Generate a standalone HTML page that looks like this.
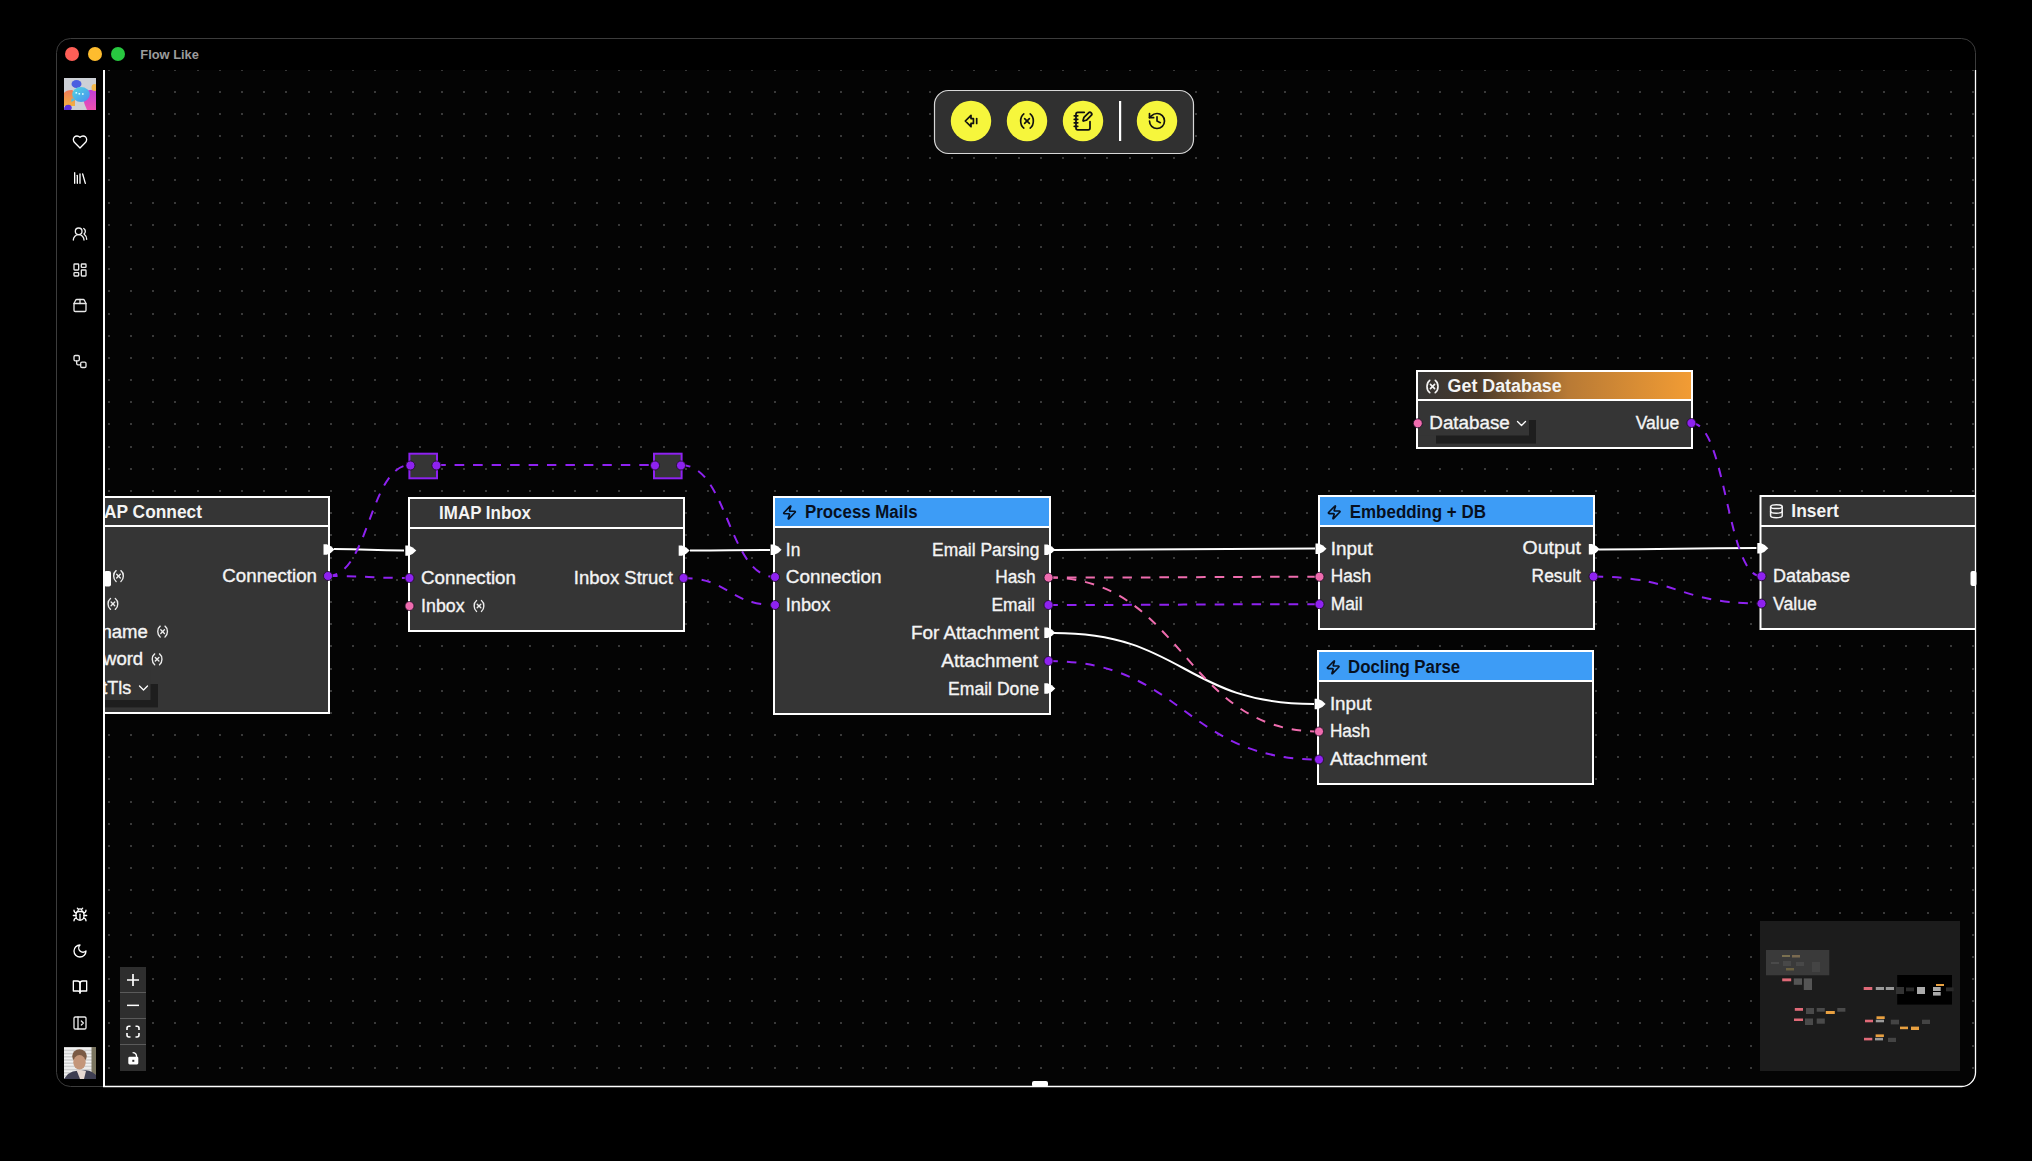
<!DOCTYPE html><html><head><meta charset="utf-8"><title>Flow Like</title><style>html,body{margin:0;padding:0;background:#000;overflow:hidden;width:2032px;height:1161px}svg{display:block}text{font-family:"Liberation Sans",sans-serif;white-space:pre}</style></head><body>
<svg width="2032" height="1161" viewBox="0 0 2032 1161">
<defs><clipPath id="canvasclip"><rect x="105" y="70" width="1870" height="1016"/></clipPath><linearGradient id="orange" x1="0" x2="1" y1="0" y2="0"><stop offset="0" stop-color="#353535"/><stop offset="0.22" stop-color="#4a3a2a"/><stop offset="0.55" stop-color="#b87a35"/><stop offset="1" stop-color="#f29c34"/></linearGradient></defs>
<rect width="2032" height="1161" fill="#000"/>
<rect x="56.5" y="38.5" width="1919" height="1048" rx="14" ry="14" fill="#000" stroke="#3c3c3c" stroke-width="1"/>
<circle cx="72" cy="54" r="7" fill="#fe5f57"/><circle cx="95" cy="54" r="7" fill="#febc2e"/><circle cx="118" cy="54" r="7" fill="#28c840"/>
<text x="140.3" y="59" font-size="12.8" font-weight="bold" fill="#9c9c9c" textLength="58.6" lengthAdjust="spacingAndGlyphs">Flow Like</text>
<path d="M105 70 H1975 V1072 A14 14 0 0 1 1961 1086 H105 Z" fill="#040404"/>
<path fill="#393939" d="M108 70h2v1h-2zM130 70h2v1h-2zM152 70h2v1h-2zM174 70h2v1h-2zM197 70h2v1h-2zM219 70h2v1h-2zM241 70h2v1h-2zM263 70h2v1h-2zM285 70h2v1h-2zM308 70h2v1h-2zM330 70h2v1h-2zM352 70h2v1h-2zM374 70h2v1h-2zM396 70h2v1h-2zM419 70h2v1h-2zM441 70h2v1h-2zM463 70h2v1h-2zM485 70h2v1h-2zM507 70h2v1h-2zM529 70h2v1h-2zM552 70h2v1h-2zM574 70h2v1h-2zM596 70h2v1h-2zM618 70h2v1h-2zM640 70h2v1h-2zM663 70h2v1h-2zM685 70h2v1h-2zM707 70h2v1h-2zM729 70h2v1h-2zM751 70h2v1h-2zM774 70h2v1h-2zM796 70h2v1h-2zM818 70h2v1h-2zM840 70h2v1h-2zM862 70h2v1h-2zM885 70h2v1h-2zM907 70h2v1h-2zM929 70h2v1h-2zM951 70h2v1h-2zM973 70h2v1h-2zM995 70h2v1h-2zM1018 70h2v1h-2zM1040 70h2v1h-2zM1062 70h2v1h-2zM1084 70h2v1h-2zM1106 70h2v1h-2zM1129 70h2v1h-2zM1151 70h2v1h-2zM1173 70h2v1h-2zM1195 70h2v1h-2zM1217 70h2v1h-2zM1240 70h2v1h-2zM1262 70h2v1h-2zM1284 70h2v1h-2zM1306 70h2v1h-2zM1328 70h2v1h-2zM1350 70h2v1h-2zM1373 70h2v1h-2zM1395 70h2v1h-2zM1417 70h2v1h-2zM1439 70h2v1h-2zM1461 70h2v1h-2zM1484 70h2v1h-2zM1506 70h2v1h-2zM1528 70h2v1h-2zM1550 70h2v1h-2zM1572 70h2v1h-2zM1595 70h2v1h-2zM1617 70h2v1h-2zM1639 70h2v1h-2zM1661 70h2v1h-2zM1683 70h2v1h-2zM1706 70h2v1h-2zM1728 70h2v1h-2zM1750 70h2v1h-2zM1772 70h2v1h-2zM1794 70h2v1h-2zM1816 70h2v1h-2zM1839 70h2v1h-2zM1861 70h2v1h-2zM1883 70h2v1h-2zM1905 70h2v1h-2zM1927 70h2v1h-2zM1950 70h2v1h-2zM1972 70h2v1h-2zM108 91h2v2h-2zM130 91h2v2h-2zM152 91h2v2h-2zM174 91h2v2h-2zM197 91h2v2h-2zM219 91h2v2h-2zM241 91h2v2h-2zM263 91h2v2h-2zM285 91h2v2h-2zM308 91h2v2h-2zM330 91h2v2h-2zM352 91h2v2h-2zM374 91h2v2h-2zM396 91h2v2h-2zM419 91h2v2h-2zM441 91h2v2h-2zM463 91h2v2h-2zM485 91h2v2h-2zM507 91h2v2h-2zM529 91h2v2h-2zM552 91h2v2h-2zM574 91h2v2h-2zM596 91h2v2h-2zM618 91h2v2h-2zM640 91h2v2h-2zM663 91h2v2h-2zM685 91h2v2h-2zM707 91h2v2h-2zM729 91h2v2h-2zM751 91h2v2h-2zM774 91h2v2h-2zM796 91h2v2h-2zM818 91h2v2h-2zM840 91h2v2h-2zM862 91h2v2h-2zM885 91h2v2h-2zM907 91h2v2h-2zM929 91h2v2h-2zM951 91h2v2h-2zM973 91h2v2h-2zM995 91h2v2h-2zM1018 91h2v2h-2zM1040 91h2v2h-2zM1062 91h2v2h-2zM1084 91h2v2h-2zM1106 91h2v2h-2zM1129 91h2v2h-2zM1151 91h2v2h-2zM1173 91h2v2h-2zM1195 91h2v2h-2zM1217 91h2v2h-2zM1240 91h2v2h-2zM1262 91h2v2h-2zM1284 91h2v2h-2zM1306 91h2v2h-2zM1328 91h2v2h-2zM1350 91h2v2h-2zM1373 91h2v2h-2zM1395 91h2v2h-2zM1417 91h2v2h-2zM1439 91h2v2h-2zM1461 91h2v2h-2zM1484 91h2v2h-2zM1506 91h2v2h-2zM1528 91h2v2h-2zM1550 91h2v2h-2zM1572 91h2v2h-2zM1595 91h2v2h-2zM1617 91h2v2h-2zM1639 91h2v2h-2zM1661 91h2v2h-2zM1683 91h2v2h-2zM1706 91h2v2h-2zM1728 91h2v2h-2zM1750 91h2v2h-2zM1772 91h2v2h-2zM1794 91h2v2h-2zM1816 91h2v2h-2zM1839 91h2v2h-2zM1861 91h2v2h-2zM1883 91h2v2h-2zM1905 91h2v2h-2zM1927 91h2v2h-2zM1950 91h2v2h-2zM1972 91h2v2h-2zM108 113h2v2h-2zM130 113h2v2h-2zM152 113h2v2h-2zM174 113h2v2h-2zM197 113h2v2h-2zM219 113h2v2h-2zM241 113h2v2h-2zM263 113h2v2h-2zM285 113h2v2h-2zM308 113h2v2h-2zM330 113h2v2h-2zM352 113h2v2h-2zM374 113h2v2h-2zM396 113h2v2h-2zM419 113h2v2h-2zM441 113h2v2h-2zM463 113h2v2h-2zM485 113h2v2h-2zM507 113h2v2h-2zM529 113h2v2h-2zM552 113h2v2h-2zM574 113h2v2h-2zM596 113h2v2h-2zM618 113h2v2h-2zM640 113h2v2h-2zM663 113h2v2h-2zM685 113h2v2h-2zM707 113h2v2h-2zM729 113h2v2h-2zM751 113h2v2h-2zM774 113h2v2h-2zM796 113h2v2h-2zM818 113h2v2h-2zM840 113h2v2h-2zM862 113h2v2h-2zM885 113h2v2h-2zM907 113h2v2h-2zM929 113h2v2h-2zM951 113h2v2h-2zM973 113h2v2h-2zM995 113h2v2h-2zM1018 113h2v2h-2zM1040 113h2v2h-2zM1062 113h2v2h-2zM1084 113h2v2h-2zM1106 113h2v2h-2zM1129 113h2v2h-2zM1151 113h2v2h-2zM1173 113h2v2h-2zM1195 113h2v2h-2zM1217 113h2v2h-2zM1240 113h2v2h-2zM1262 113h2v2h-2zM1284 113h2v2h-2zM1306 113h2v2h-2zM1328 113h2v2h-2zM1350 113h2v2h-2zM1373 113h2v2h-2zM1395 113h2v2h-2zM1417 113h2v2h-2zM1439 113h2v2h-2zM1461 113h2v2h-2zM1484 113h2v2h-2zM1506 113h2v2h-2zM1528 113h2v2h-2zM1550 113h2v2h-2zM1572 113h2v2h-2zM1595 113h2v2h-2zM1617 113h2v2h-2zM1639 113h2v2h-2zM1661 113h2v2h-2zM1683 113h2v2h-2zM1706 113h2v2h-2zM1728 113h2v2h-2zM1750 113h2v2h-2zM1772 113h2v2h-2zM1794 113h2v2h-2zM1816 113h2v2h-2zM1839 113h2v2h-2zM1861 113h2v2h-2zM1883 113h2v2h-2zM1905 113h2v2h-2zM1927 113h2v2h-2zM1950 113h2v2h-2zM1972 113h2v2h-2zM108 135h2v2h-2zM130 135h2v2h-2zM152 135h2v2h-2zM174 135h2v2h-2zM197 135h2v2h-2zM219 135h2v2h-2zM241 135h2v2h-2zM263 135h2v2h-2zM285 135h2v2h-2zM308 135h2v2h-2zM330 135h2v2h-2zM352 135h2v2h-2zM374 135h2v2h-2zM396 135h2v2h-2zM419 135h2v2h-2zM441 135h2v2h-2zM463 135h2v2h-2zM485 135h2v2h-2zM507 135h2v2h-2zM529 135h2v2h-2zM552 135h2v2h-2zM574 135h2v2h-2zM596 135h2v2h-2zM618 135h2v2h-2zM640 135h2v2h-2zM663 135h2v2h-2zM685 135h2v2h-2zM707 135h2v2h-2zM729 135h2v2h-2zM751 135h2v2h-2zM774 135h2v2h-2zM796 135h2v2h-2zM818 135h2v2h-2zM840 135h2v2h-2zM862 135h2v2h-2zM885 135h2v2h-2zM907 135h2v2h-2zM929 135h2v2h-2zM951 135h2v2h-2zM973 135h2v2h-2zM995 135h2v2h-2zM1018 135h2v2h-2zM1040 135h2v2h-2zM1062 135h2v2h-2zM1084 135h2v2h-2zM1106 135h2v2h-2zM1129 135h2v2h-2zM1151 135h2v2h-2zM1173 135h2v2h-2zM1195 135h2v2h-2zM1217 135h2v2h-2zM1240 135h2v2h-2zM1262 135h2v2h-2zM1284 135h2v2h-2zM1306 135h2v2h-2zM1328 135h2v2h-2zM1350 135h2v2h-2zM1373 135h2v2h-2zM1395 135h2v2h-2zM1417 135h2v2h-2zM1439 135h2v2h-2zM1461 135h2v2h-2zM1484 135h2v2h-2zM1506 135h2v2h-2zM1528 135h2v2h-2zM1550 135h2v2h-2zM1572 135h2v2h-2zM1595 135h2v2h-2zM1617 135h2v2h-2zM1639 135h2v2h-2zM1661 135h2v2h-2zM1683 135h2v2h-2zM1706 135h2v2h-2zM1728 135h2v2h-2zM1750 135h2v2h-2zM1772 135h2v2h-2zM1794 135h2v2h-2zM1816 135h2v2h-2zM1839 135h2v2h-2zM1861 135h2v2h-2zM1883 135h2v2h-2zM1905 135h2v2h-2zM1927 135h2v2h-2zM1950 135h2v2h-2zM1972 135h2v2h-2zM108 157h2v2h-2zM130 157h2v2h-2zM152 157h2v2h-2zM174 157h2v2h-2zM197 157h2v2h-2zM219 157h2v2h-2zM241 157h2v2h-2zM263 157h2v2h-2zM285 157h2v2h-2zM308 157h2v2h-2zM330 157h2v2h-2zM352 157h2v2h-2zM374 157h2v2h-2zM396 157h2v2h-2zM419 157h2v2h-2zM441 157h2v2h-2zM463 157h2v2h-2zM485 157h2v2h-2zM507 157h2v2h-2zM529 157h2v2h-2zM552 157h2v2h-2zM574 157h2v2h-2zM596 157h2v2h-2zM618 157h2v2h-2zM640 157h2v2h-2zM663 157h2v2h-2zM685 157h2v2h-2zM707 157h2v2h-2zM729 157h2v2h-2zM751 157h2v2h-2zM774 157h2v2h-2zM796 157h2v2h-2zM818 157h2v2h-2zM840 157h2v2h-2zM862 157h2v2h-2zM885 157h2v2h-2zM907 157h2v2h-2zM929 157h2v2h-2zM951 157h2v2h-2zM973 157h2v2h-2zM995 157h2v2h-2zM1018 157h2v2h-2zM1040 157h2v2h-2zM1062 157h2v2h-2zM1084 157h2v2h-2zM1106 157h2v2h-2zM1129 157h2v2h-2zM1151 157h2v2h-2zM1173 157h2v2h-2zM1195 157h2v2h-2zM1217 157h2v2h-2zM1240 157h2v2h-2zM1262 157h2v2h-2zM1284 157h2v2h-2zM1306 157h2v2h-2zM1328 157h2v2h-2zM1350 157h2v2h-2zM1373 157h2v2h-2zM1395 157h2v2h-2zM1417 157h2v2h-2zM1439 157h2v2h-2zM1461 157h2v2h-2zM1484 157h2v2h-2zM1506 157h2v2h-2zM1528 157h2v2h-2zM1550 157h2v2h-2zM1572 157h2v2h-2zM1595 157h2v2h-2zM1617 157h2v2h-2zM1639 157h2v2h-2zM1661 157h2v2h-2zM1683 157h2v2h-2zM1706 157h2v2h-2zM1728 157h2v2h-2zM1750 157h2v2h-2zM1772 157h2v2h-2zM1794 157h2v2h-2zM1816 157h2v2h-2zM1839 157h2v2h-2zM1861 157h2v2h-2zM1883 157h2v2h-2zM1905 157h2v2h-2zM1927 157h2v2h-2zM1950 157h2v2h-2zM1972 157h2v2h-2zM108 179h2v2h-2zM130 179h2v2h-2zM152 179h2v2h-2zM174 179h2v2h-2zM197 179h2v2h-2zM219 179h2v2h-2zM241 179h2v2h-2zM263 179h2v2h-2zM285 179h2v2h-2zM308 179h2v2h-2zM330 179h2v2h-2zM352 179h2v2h-2zM374 179h2v2h-2zM396 179h2v2h-2zM419 179h2v2h-2zM441 179h2v2h-2zM463 179h2v2h-2zM485 179h2v2h-2zM507 179h2v2h-2zM529 179h2v2h-2zM552 179h2v2h-2zM574 179h2v2h-2zM596 179h2v2h-2zM618 179h2v2h-2zM640 179h2v2h-2zM663 179h2v2h-2zM685 179h2v2h-2zM707 179h2v2h-2zM729 179h2v2h-2zM751 179h2v2h-2zM774 179h2v2h-2zM796 179h2v2h-2zM818 179h2v2h-2zM840 179h2v2h-2zM862 179h2v2h-2zM885 179h2v2h-2zM907 179h2v2h-2zM929 179h2v2h-2zM951 179h2v2h-2zM973 179h2v2h-2zM995 179h2v2h-2zM1018 179h2v2h-2zM1040 179h2v2h-2zM1062 179h2v2h-2zM1084 179h2v2h-2zM1106 179h2v2h-2zM1129 179h2v2h-2zM1151 179h2v2h-2zM1173 179h2v2h-2zM1195 179h2v2h-2zM1217 179h2v2h-2zM1240 179h2v2h-2zM1262 179h2v2h-2zM1284 179h2v2h-2zM1306 179h2v2h-2zM1328 179h2v2h-2zM1350 179h2v2h-2zM1373 179h2v2h-2zM1395 179h2v2h-2zM1417 179h2v2h-2zM1439 179h2v2h-2zM1461 179h2v2h-2zM1484 179h2v2h-2zM1506 179h2v2h-2zM1528 179h2v2h-2zM1550 179h2v2h-2zM1572 179h2v2h-2zM1595 179h2v2h-2zM1617 179h2v2h-2zM1639 179h2v2h-2zM1661 179h2v2h-2zM1683 179h2v2h-2zM1706 179h2v2h-2zM1728 179h2v2h-2zM1750 179h2v2h-2zM1772 179h2v2h-2zM1794 179h2v2h-2zM1816 179h2v2h-2zM1839 179h2v2h-2zM1861 179h2v2h-2zM1883 179h2v2h-2zM1905 179h2v2h-2zM1927 179h2v2h-2zM1950 179h2v2h-2zM1972 179h2v2h-2zM108 202h2v2h-2zM130 202h2v2h-2zM152 202h2v2h-2zM174 202h2v2h-2zM197 202h2v2h-2zM219 202h2v2h-2zM241 202h2v2h-2zM263 202h2v2h-2zM285 202h2v2h-2zM308 202h2v2h-2zM330 202h2v2h-2zM352 202h2v2h-2zM374 202h2v2h-2zM396 202h2v2h-2zM419 202h2v2h-2zM441 202h2v2h-2zM463 202h2v2h-2zM485 202h2v2h-2zM507 202h2v2h-2zM529 202h2v2h-2zM552 202h2v2h-2zM574 202h2v2h-2zM596 202h2v2h-2zM618 202h2v2h-2zM640 202h2v2h-2zM663 202h2v2h-2zM685 202h2v2h-2zM707 202h2v2h-2zM729 202h2v2h-2zM751 202h2v2h-2zM774 202h2v2h-2zM796 202h2v2h-2zM818 202h2v2h-2zM840 202h2v2h-2zM862 202h2v2h-2zM885 202h2v2h-2zM907 202h2v2h-2zM929 202h2v2h-2zM951 202h2v2h-2zM973 202h2v2h-2zM995 202h2v2h-2zM1018 202h2v2h-2zM1040 202h2v2h-2zM1062 202h2v2h-2zM1084 202h2v2h-2zM1106 202h2v2h-2zM1129 202h2v2h-2zM1151 202h2v2h-2zM1173 202h2v2h-2zM1195 202h2v2h-2zM1217 202h2v2h-2zM1240 202h2v2h-2zM1262 202h2v2h-2zM1284 202h2v2h-2zM1306 202h2v2h-2zM1328 202h2v2h-2zM1350 202h2v2h-2zM1373 202h2v2h-2zM1395 202h2v2h-2zM1417 202h2v2h-2zM1439 202h2v2h-2zM1461 202h2v2h-2zM1484 202h2v2h-2zM1506 202h2v2h-2zM1528 202h2v2h-2zM1550 202h2v2h-2zM1572 202h2v2h-2zM1595 202h2v2h-2zM1617 202h2v2h-2zM1639 202h2v2h-2zM1661 202h2v2h-2zM1683 202h2v2h-2zM1706 202h2v2h-2zM1728 202h2v2h-2zM1750 202h2v2h-2zM1772 202h2v2h-2zM1794 202h2v2h-2zM1816 202h2v2h-2zM1839 202h2v2h-2zM1861 202h2v2h-2zM1883 202h2v2h-2zM1905 202h2v2h-2zM1927 202h2v2h-2zM1950 202h2v2h-2zM1972 202h2v2h-2zM108 224h2v2h-2zM130 224h2v2h-2zM152 224h2v2h-2zM174 224h2v2h-2zM197 224h2v2h-2zM219 224h2v2h-2zM241 224h2v2h-2zM263 224h2v2h-2zM285 224h2v2h-2zM308 224h2v2h-2zM330 224h2v2h-2zM352 224h2v2h-2zM374 224h2v2h-2zM396 224h2v2h-2zM419 224h2v2h-2zM441 224h2v2h-2zM463 224h2v2h-2zM485 224h2v2h-2zM507 224h2v2h-2zM529 224h2v2h-2zM552 224h2v2h-2zM574 224h2v2h-2zM596 224h2v2h-2zM618 224h2v2h-2zM640 224h2v2h-2zM663 224h2v2h-2zM685 224h2v2h-2zM707 224h2v2h-2zM729 224h2v2h-2zM751 224h2v2h-2zM774 224h2v2h-2zM796 224h2v2h-2zM818 224h2v2h-2zM840 224h2v2h-2zM862 224h2v2h-2zM885 224h2v2h-2zM907 224h2v2h-2zM929 224h2v2h-2zM951 224h2v2h-2zM973 224h2v2h-2zM995 224h2v2h-2zM1018 224h2v2h-2zM1040 224h2v2h-2zM1062 224h2v2h-2zM1084 224h2v2h-2zM1106 224h2v2h-2zM1129 224h2v2h-2zM1151 224h2v2h-2zM1173 224h2v2h-2zM1195 224h2v2h-2zM1217 224h2v2h-2zM1240 224h2v2h-2zM1262 224h2v2h-2zM1284 224h2v2h-2zM1306 224h2v2h-2zM1328 224h2v2h-2zM1350 224h2v2h-2zM1373 224h2v2h-2zM1395 224h2v2h-2zM1417 224h2v2h-2zM1439 224h2v2h-2zM1461 224h2v2h-2zM1484 224h2v2h-2zM1506 224h2v2h-2zM1528 224h2v2h-2zM1550 224h2v2h-2zM1572 224h2v2h-2zM1595 224h2v2h-2zM1617 224h2v2h-2zM1639 224h2v2h-2zM1661 224h2v2h-2zM1683 224h2v2h-2zM1706 224h2v2h-2zM1728 224h2v2h-2zM1750 224h2v2h-2zM1772 224h2v2h-2zM1794 224h2v2h-2zM1816 224h2v2h-2zM1839 224h2v2h-2zM1861 224h2v2h-2zM1883 224h2v2h-2zM1905 224h2v2h-2zM1927 224h2v2h-2zM1950 224h2v2h-2zM1972 224h2v2h-2zM108 246h2v2h-2zM130 246h2v2h-2zM152 246h2v2h-2zM174 246h2v2h-2zM197 246h2v2h-2zM219 246h2v2h-2zM241 246h2v2h-2zM263 246h2v2h-2zM285 246h2v2h-2zM308 246h2v2h-2zM330 246h2v2h-2zM352 246h2v2h-2zM374 246h2v2h-2zM396 246h2v2h-2zM419 246h2v2h-2zM441 246h2v2h-2zM463 246h2v2h-2zM485 246h2v2h-2zM507 246h2v2h-2zM529 246h2v2h-2zM552 246h2v2h-2zM574 246h2v2h-2zM596 246h2v2h-2zM618 246h2v2h-2zM640 246h2v2h-2zM663 246h2v2h-2zM685 246h2v2h-2zM707 246h2v2h-2zM729 246h2v2h-2zM751 246h2v2h-2zM774 246h2v2h-2zM796 246h2v2h-2zM818 246h2v2h-2zM840 246h2v2h-2zM862 246h2v2h-2zM885 246h2v2h-2zM907 246h2v2h-2zM929 246h2v2h-2zM951 246h2v2h-2zM973 246h2v2h-2zM995 246h2v2h-2zM1018 246h2v2h-2zM1040 246h2v2h-2zM1062 246h2v2h-2zM1084 246h2v2h-2zM1106 246h2v2h-2zM1129 246h2v2h-2zM1151 246h2v2h-2zM1173 246h2v2h-2zM1195 246h2v2h-2zM1217 246h2v2h-2zM1240 246h2v2h-2zM1262 246h2v2h-2zM1284 246h2v2h-2zM1306 246h2v2h-2zM1328 246h2v2h-2zM1350 246h2v2h-2zM1373 246h2v2h-2zM1395 246h2v2h-2zM1417 246h2v2h-2zM1439 246h2v2h-2zM1461 246h2v2h-2zM1484 246h2v2h-2zM1506 246h2v2h-2zM1528 246h2v2h-2zM1550 246h2v2h-2zM1572 246h2v2h-2zM1595 246h2v2h-2zM1617 246h2v2h-2zM1639 246h2v2h-2zM1661 246h2v2h-2zM1683 246h2v2h-2zM1706 246h2v2h-2zM1728 246h2v2h-2zM1750 246h2v2h-2zM1772 246h2v2h-2zM1794 246h2v2h-2zM1816 246h2v2h-2zM1839 246h2v2h-2zM1861 246h2v2h-2zM1883 246h2v2h-2zM1905 246h2v2h-2zM1927 246h2v2h-2zM1950 246h2v2h-2zM1972 246h2v2h-2zM108 268h2v2h-2zM130 268h2v2h-2zM152 268h2v2h-2zM174 268h2v2h-2zM197 268h2v2h-2zM219 268h2v2h-2zM241 268h2v2h-2zM263 268h2v2h-2zM285 268h2v2h-2zM308 268h2v2h-2zM330 268h2v2h-2zM352 268h2v2h-2zM374 268h2v2h-2zM396 268h2v2h-2zM419 268h2v2h-2zM441 268h2v2h-2zM463 268h2v2h-2zM485 268h2v2h-2zM507 268h2v2h-2zM529 268h2v2h-2zM552 268h2v2h-2zM574 268h2v2h-2zM596 268h2v2h-2zM618 268h2v2h-2zM640 268h2v2h-2zM663 268h2v2h-2zM685 268h2v2h-2zM707 268h2v2h-2zM729 268h2v2h-2zM751 268h2v2h-2zM774 268h2v2h-2zM796 268h2v2h-2zM818 268h2v2h-2zM840 268h2v2h-2zM862 268h2v2h-2zM885 268h2v2h-2zM907 268h2v2h-2zM929 268h2v2h-2zM951 268h2v2h-2zM973 268h2v2h-2zM995 268h2v2h-2zM1018 268h2v2h-2zM1040 268h2v2h-2zM1062 268h2v2h-2zM1084 268h2v2h-2zM1106 268h2v2h-2zM1129 268h2v2h-2zM1151 268h2v2h-2zM1173 268h2v2h-2zM1195 268h2v2h-2zM1217 268h2v2h-2zM1240 268h2v2h-2zM1262 268h2v2h-2zM1284 268h2v2h-2zM1306 268h2v2h-2zM1328 268h2v2h-2zM1350 268h2v2h-2zM1373 268h2v2h-2zM1395 268h2v2h-2zM1417 268h2v2h-2zM1439 268h2v2h-2zM1461 268h2v2h-2zM1484 268h2v2h-2zM1506 268h2v2h-2zM1528 268h2v2h-2zM1550 268h2v2h-2zM1572 268h2v2h-2zM1595 268h2v2h-2zM1617 268h2v2h-2zM1639 268h2v2h-2zM1661 268h2v2h-2zM1683 268h2v2h-2zM1706 268h2v2h-2zM1728 268h2v2h-2zM1750 268h2v2h-2zM1772 268h2v2h-2zM1794 268h2v2h-2zM1816 268h2v2h-2zM1839 268h2v2h-2zM1861 268h2v2h-2zM1883 268h2v2h-2zM1905 268h2v2h-2zM1927 268h2v2h-2zM1950 268h2v2h-2zM1972 268h2v2h-2zM108 290h2v2h-2zM130 290h2v2h-2zM152 290h2v2h-2zM174 290h2v2h-2zM197 290h2v2h-2zM219 290h2v2h-2zM241 290h2v2h-2zM263 290h2v2h-2zM285 290h2v2h-2zM308 290h2v2h-2zM330 290h2v2h-2zM352 290h2v2h-2zM374 290h2v2h-2zM396 290h2v2h-2zM419 290h2v2h-2zM441 290h2v2h-2zM463 290h2v2h-2zM485 290h2v2h-2zM507 290h2v2h-2zM529 290h2v2h-2zM552 290h2v2h-2zM574 290h2v2h-2zM596 290h2v2h-2zM618 290h2v2h-2zM640 290h2v2h-2zM663 290h2v2h-2zM685 290h2v2h-2zM707 290h2v2h-2zM729 290h2v2h-2zM751 290h2v2h-2zM774 290h2v2h-2zM796 290h2v2h-2zM818 290h2v2h-2zM840 290h2v2h-2zM862 290h2v2h-2zM885 290h2v2h-2zM907 290h2v2h-2zM929 290h2v2h-2zM951 290h2v2h-2zM973 290h2v2h-2zM995 290h2v2h-2zM1018 290h2v2h-2zM1040 290h2v2h-2zM1062 290h2v2h-2zM1084 290h2v2h-2zM1106 290h2v2h-2zM1129 290h2v2h-2zM1151 290h2v2h-2zM1173 290h2v2h-2zM1195 290h2v2h-2zM1217 290h2v2h-2zM1240 290h2v2h-2zM1262 290h2v2h-2zM1284 290h2v2h-2zM1306 290h2v2h-2zM1328 290h2v2h-2zM1350 290h2v2h-2zM1373 290h2v2h-2zM1395 290h2v2h-2zM1417 290h2v2h-2zM1439 290h2v2h-2zM1461 290h2v2h-2zM1484 290h2v2h-2zM1506 290h2v2h-2zM1528 290h2v2h-2zM1550 290h2v2h-2zM1572 290h2v2h-2zM1595 290h2v2h-2zM1617 290h2v2h-2zM1639 290h2v2h-2zM1661 290h2v2h-2zM1683 290h2v2h-2zM1706 290h2v2h-2zM1728 290h2v2h-2zM1750 290h2v2h-2zM1772 290h2v2h-2zM1794 290h2v2h-2zM1816 290h2v2h-2zM1839 290h2v2h-2zM1861 290h2v2h-2zM1883 290h2v2h-2zM1905 290h2v2h-2zM1927 290h2v2h-2zM1950 290h2v2h-2zM1972 290h2v2h-2zM108 313h2v2h-2zM130 313h2v2h-2zM152 313h2v2h-2zM174 313h2v2h-2zM197 313h2v2h-2zM219 313h2v2h-2zM241 313h2v2h-2zM263 313h2v2h-2zM285 313h2v2h-2zM308 313h2v2h-2zM330 313h2v2h-2zM352 313h2v2h-2zM374 313h2v2h-2zM396 313h2v2h-2zM419 313h2v2h-2zM441 313h2v2h-2zM463 313h2v2h-2zM485 313h2v2h-2zM507 313h2v2h-2zM529 313h2v2h-2zM552 313h2v2h-2zM574 313h2v2h-2zM596 313h2v2h-2zM618 313h2v2h-2zM640 313h2v2h-2zM663 313h2v2h-2zM685 313h2v2h-2zM707 313h2v2h-2zM729 313h2v2h-2zM751 313h2v2h-2zM774 313h2v2h-2zM796 313h2v2h-2zM818 313h2v2h-2zM840 313h2v2h-2zM862 313h2v2h-2zM885 313h2v2h-2zM907 313h2v2h-2zM929 313h2v2h-2zM951 313h2v2h-2zM973 313h2v2h-2zM995 313h2v2h-2zM1018 313h2v2h-2zM1040 313h2v2h-2zM1062 313h2v2h-2zM1084 313h2v2h-2zM1106 313h2v2h-2zM1129 313h2v2h-2zM1151 313h2v2h-2zM1173 313h2v2h-2zM1195 313h2v2h-2zM1217 313h2v2h-2zM1240 313h2v2h-2zM1262 313h2v2h-2zM1284 313h2v2h-2zM1306 313h2v2h-2zM1328 313h2v2h-2zM1350 313h2v2h-2zM1373 313h2v2h-2zM1395 313h2v2h-2zM1417 313h2v2h-2zM1439 313h2v2h-2zM1461 313h2v2h-2zM1484 313h2v2h-2zM1506 313h2v2h-2zM1528 313h2v2h-2zM1550 313h2v2h-2zM1572 313h2v2h-2zM1595 313h2v2h-2zM1617 313h2v2h-2zM1639 313h2v2h-2zM1661 313h2v2h-2zM1683 313h2v2h-2zM1706 313h2v2h-2zM1728 313h2v2h-2zM1750 313h2v2h-2zM1772 313h2v2h-2zM1794 313h2v2h-2zM1816 313h2v2h-2zM1839 313h2v2h-2zM1861 313h2v2h-2zM1883 313h2v2h-2zM1905 313h2v2h-2zM1927 313h2v2h-2zM1950 313h2v2h-2zM1972 313h2v2h-2zM108 335h2v2h-2zM130 335h2v2h-2zM152 335h2v2h-2zM174 335h2v2h-2zM197 335h2v2h-2zM219 335h2v2h-2zM241 335h2v2h-2zM263 335h2v2h-2zM285 335h2v2h-2zM308 335h2v2h-2zM330 335h2v2h-2zM352 335h2v2h-2zM374 335h2v2h-2zM396 335h2v2h-2zM419 335h2v2h-2zM441 335h2v2h-2zM463 335h2v2h-2zM485 335h2v2h-2zM507 335h2v2h-2zM529 335h2v2h-2zM552 335h2v2h-2zM574 335h2v2h-2zM596 335h2v2h-2zM618 335h2v2h-2zM640 335h2v2h-2zM663 335h2v2h-2zM685 335h2v2h-2zM707 335h2v2h-2zM729 335h2v2h-2zM751 335h2v2h-2zM774 335h2v2h-2zM796 335h2v2h-2zM818 335h2v2h-2zM840 335h2v2h-2zM862 335h2v2h-2zM885 335h2v2h-2zM907 335h2v2h-2zM929 335h2v2h-2zM951 335h2v2h-2zM973 335h2v2h-2zM995 335h2v2h-2zM1018 335h2v2h-2zM1040 335h2v2h-2zM1062 335h2v2h-2zM1084 335h2v2h-2zM1106 335h2v2h-2zM1129 335h2v2h-2zM1151 335h2v2h-2zM1173 335h2v2h-2zM1195 335h2v2h-2zM1217 335h2v2h-2zM1240 335h2v2h-2zM1262 335h2v2h-2zM1284 335h2v2h-2zM1306 335h2v2h-2zM1328 335h2v2h-2zM1350 335h2v2h-2zM1373 335h2v2h-2zM1395 335h2v2h-2zM1417 335h2v2h-2zM1439 335h2v2h-2zM1461 335h2v2h-2zM1484 335h2v2h-2zM1506 335h2v2h-2zM1528 335h2v2h-2zM1550 335h2v2h-2zM1572 335h2v2h-2zM1595 335h2v2h-2zM1617 335h2v2h-2zM1639 335h2v2h-2zM1661 335h2v2h-2zM1683 335h2v2h-2zM1706 335h2v2h-2zM1728 335h2v2h-2zM1750 335h2v2h-2zM1772 335h2v2h-2zM1794 335h2v2h-2zM1816 335h2v2h-2zM1839 335h2v2h-2zM1861 335h2v2h-2zM1883 335h2v2h-2zM1905 335h2v2h-2zM1927 335h2v2h-2zM1950 335h2v2h-2zM1972 335h2v2h-2zM108 357h2v2h-2zM130 357h2v2h-2zM152 357h2v2h-2zM174 357h2v2h-2zM197 357h2v2h-2zM219 357h2v2h-2zM241 357h2v2h-2zM263 357h2v2h-2zM285 357h2v2h-2zM308 357h2v2h-2zM330 357h2v2h-2zM352 357h2v2h-2zM374 357h2v2h-2zM396 357h2v2h-2zM419 357h2v2h-2zM441 357h2v2h-2zM463 357h2v2h-2zM485 357h2v2h-2zM507 357h2v2h-2zM529 357h2v2h-2zM552 357h2v2h-2zM574 357h2v2h-2zM596 357h2v2h-2zM618 357h2v2h-2zM640 357h2v2h-2zM663 357h2v2h-2zM685 357h2v2h-2zM707 357h2v2h-2zM729 357h2v2h-2zM751 357h2v2h-2zM774 357h2v2h-2zM796 357h2v2h-2zM818 357h2v2h-2zM840 357h2v2h-2zM862 357h2v2h-2zM885 357h2v2h-2zM907 357h2v2h-2zM929 357h2v2h-2zM951 357h2v2h-2zM973 357h2v2h-2zM995 357h2v2h-2zM1018 357h2v2h-2zM1040 357h2v2h-2zM1062 357h2v2h-2zM1084 357h2v2h-2zM1106 357h2v2h-2zM1129 357h2v2h-2zM1151 357h2v2h-2zM1173 357h2v2h-2zM1195 357h2v2h-2zM1217 357h2v2h-2zM1240 357h2v2h-2zM1262 357h2v2h-2zM1284 357h2v2h-2zM1306 357h2v2h-2zM1328 357h2v2h-2zM1350 357h2v2h-2zM1373 357h2v2h-2zM1395 357h2v2h-2zM1417 357h2v2h-2zM1439 357h2v2h-2zM1461 357h2v2h-2zM1484 357h2v2h-2zM1506 357h2v2h-2zM1528 357h2v2h-2zM1550 357h2v2h-2zM1572 357h2v2h-2zM1595 357h2v2h-2zM1617 357h2v2h-2zM1639 357h2v2h-2zM1661 357h2v2h-2zM1683 357h2v2h-2zM1706 357h2v2h-2zM1728 357h2v2h-2zM1750 357h2v2h-2zM1772 357h2v2h-2zM1794 357h2v2h-2zM1816 357h2v2h-2zM1839 357h2v2h-2zM1861 357h2v2h-2zM1883 357h2v2h-2zM1905 357h2v2h-2zM1927 357h2v2h-2zM1950 357h2v2h-2zM1972 357h2v2h-2zM108 379h2v2h-2zM130 379h2v2h-2zM152 379h2v2h-2zM174 379h2v2h-2zM197 379h2v2h-2zM219 379h2v2h-2zM241 379h2v2h-2zM263 379h2v2h-2zM285 379h2v2h-2zM308 379h2v2h-2zM330 379h2v2h-2zM352 379h2v2h-2zM374 379h2v2h-2zM396 379h2v2h-2zM419 379h2v2h-2zM441 379h2v2h-2zM463 379h2v2h-2zM485 379h2v2h-2zM507 379h2v2h-2zM529 379h2v2h-2zM552 379h2v2h-2zM574 379h2v2h-2zM596 379h2v2h-2zM618 379h2v2h-2zM640 379h2v2h-2zM663 379h2v2h-2zM685 379h2v2h-2zM707 379h2v2h-2zM729 379h2v2h-2zM751 379h2v2h-2zM774 379h2v2h-2zM796 379h2v2h-2zM818 379h2v2h-2zM840 379h2v2h-2zM862 379h2v2h-2zM885 379h2v2h-2zM907 379h2v2h-2zM929 379h2v2h-2zM951 379h2v2h-2zM973 379h2v2h-2zM995 379h2v2h-2zM1018 379h2v2h-2zM1040 379h2v2h-2zM1062 379h2v2h-2zM1084 379h2v2h-2zM1106 379h2v2h-2zM1129 379h2v2h-2zM1151 379h2v2h-2zM1173 379h2v2h-2zM1195 379h2v2h-2zM1217 379h2v2h-2zM1240 379h2v2h-2zM1262 379h2v2h-2zM1284 379h2v2h-2zM1306 379h2v2h-2zM1328 379h2v2h-2zM1350 379h2v2h-2zM1373 379h2v2h-2zM1395 379h2v2h-2zM1417 379h2v2h-2zM1439 379h2v2h-2zM1461 379h2v2h-2zM1484 379h2v2h-2zM1506 379h2v2h-2zM1528 379h2v2h-2zM1550 379h2v2h-2zM1572 379h2v2h-2zM1595 379h2v2h-2zM1617 379h2v2h-2zM1639 379h2v2h-2zM1661 379h2v2h-2zM1683 379h2v2h-2zM1706 379h2v2h-2zM1728 379h2v2h-2zM1750 379h2v2h-2zM1772 379h2v2h-2zM1794 379h2v2h-2zM1816 379h2v2h-2zM1839 379h2v2h-2zM1861 379h2v2h-2zM1883 379h2v2h-2zM1905 379h2v2h-2zM1927 379h2v2h-2zM1950 379h2v2h-2zM1972 379h2v2h-2zM108 401h2v2h-2zM130 401h2v2h-2zM152 401h2v2h-2zM174 401h2v2h-2zM197 401h2v2h-2zM219 401h2v2h-2zM241 401h2v2h-2zM263 401h2v2h-2zM285 401h2v2h-2zM308 401h2v2h-2zM330 401h2v2h-2zM352 401h2v2h-2zM374 401h2v2h-2zM396 401h2v2h-2zM419 401h2v2h-2zM441 401h2v2h-2zM463 401h2v2h-2zM485 401h2v2h-2zM507 401h2v2h-2zM529 401h2v2h-2zM552 401h2v2h-2zM574 401h2v2h-2zM596 401h2v2h-2zM618 401h2v2h-2zM640 401h2v2h-2zM663 401h2v2h-2zM685 401h2v2h-2zM707 401h2v2h-2zM729 401h2v2h-2zM751 401h2v2h-2zM774 401h2v2h-2zM796 401h2v2h-2zM818 401h2v2h-2zM840 401h2v2h-2zM862 401h2v2h-2zM885 401h2v2h-2zM907 401h2v2h-2zM929 401h2v2h-2zM951 401h2v2h-2zM973 401h2v2h-2zM995 401h2v2h-2zM1018 401h2v2h-2zM1040 401h2v2h-2zM1062 401h2v2h-2zM1084 401h2v2h-2zM1106 401h2v2h-2zM1129 401h2v2h-2zM1151 401h2v2h-2zM1173 401h2v2h-2zM1195 401h2v2h-2zM1217 401h2v2h-2zM1240 401h2v2h-2zM1262 401h2v2h-2zM1284 401h2v2h-2zM1306 401h2v2h-2zM1328 401h2v2h-2zM1350 401h2v2h-2zM1373 401h2v2h-2zM1395 401h2v2h-2zM1417 401h2v2h-2zM1439 401h2v2h-2zM1461 401h2v2h-2zM1484 401h2v2h-2zM1506 401h2v2h-2zM1528 401h2v2h-2zM1550 401h2v2h-2zM1572 401h2v2h-2zM1595 401h2v2h-2zM1617 401h2v2h-2zM1639 401h2v2h-2zM1661 401h2v2h-2zM1683 401h2v2h-2zM1706 401h2v2h-2zM1728 401h2v2h-2zM1750 401h2v2h-2zM1772 401h2v2h-2zM1794 401h2v2h-2zM1816 401h2v2h-2zM1839 401h2v2h-2zM1861 401h2v2h-2zM1883 401h2v2h-2zM1905 401h2v2h-2zM1927 401h2v2h-2zM1950 401h2v2h-2zM1972 401h2v2h-2zM108 423h2v2h-2zM130 423h2v2h-2zM152 423h2v2h-2zM174 423h2v2h-2zM197 423h2v2h-2zM219 423h2v2h-2zM241 423h2v2h-2zM263 423h2v2h-2zM285 423h2v2h-2zM308 423h2v2h-2zM330 423h2v2h-2zM352 423h2v2h-2zM374 423h2v2h-2zM396 423h2v2h-2zM419 423h2v2h-2zM441 423h2v2h-2zM463 423h2v2h-2zM485 423h2v2h-2zM507 423h2v2h-2zM529 423h2v2h-2zM552 423h2v2h-2zM574 423h2v2h-2zM596 423h2v2h-2zM618 423h2v2h-2zM640 423h2v2h-2zM663 423h2v2h-2zM685 423h2v2h-2zM707 423h2v2h-2zM729 423h2v2h-2zM751 423h2v2h-2zM774 423h2v2h-2zM796 423h2v2h-2zM818 423h2v2h-2zM840 423h2v2h-2zM862 423h2v2h-2zM885 423h2v2h-2zM907 423h2v2h-2zM929 423h2v2h-2zM951 423h2v2h-2zM973 423h2v2h-2zM995 423h2v2h-2zM1018 423h2v2h-2zM1040 423h2v2h-2zM1062 423h2v2h-2zM1084 423h2v2h-2zM1106 423h2v2h-2zM1129 423h2v2h-2zM1151 423h2v2h-2zM1173 423h2v2h-2zM1195 423h2v2h-2zM1217 423h2v2h-2zM1240 423h2v2h-2zM1262 423h2v2h-2zM1284 423h2v2h-2zM1306 423h2v2h-2zM1328 423h2v2h-2zM1350 423h2v2h-2zM1373 423h2v2h-2zM1395 423h2v2h-2zM1417 423h2v2h-2zM1439 423h2v2h-2zM1461 423h2v2h-2zM1484 423h2v2h-2zM1506 423h2v2h-2zM1528 423h2v2h-2zM1550 423h2v2h-2zM1572 423h2v2h-2zM1595 423h2v2h-2zM1617 423h2v2h-2zM1639 423h2v2h-2zM1661 423h2v2h-2zM1683 423h2v2h-2zM1706 423h2v2h-2zM1728 423h2v2h-2zM1750 423h2v2h-2zM1772 423h2v2h-2zM1794 423h2v2h-2zM1816 423h2v2h-2zM1839 423h2v2h-2zM1861 423h2v2h-2zM1883 423h2v2h-2zM1905 423h2v2h-2zM1927 423h2v2h-2zM1950 423h2v2h-2zM1972 423h2v2h-2zM108 446h2v2h-2zM130 446h2v2h-2zM152 446h2v2h-2zM174 446h2v2h-2zM197 446h2v2h-2zM219 446h2v2h-2zM241 446h2v2h-2zM263 446h2v2h-2zM285 446h2v2h-2zM308 446h2v2h-2zM330 446h2v2h-2zM352 446h2v2h-2zM374 446h2v2h-2zM396 446h2v2h-2zM419 446h2v2h-2zM441 446h2v2h-2zM463 446h2v2h-2zM485 446h2v2h-2zM507 446h2v2h-2zM529 446h2v2h-2zM552 446h2v2h-2zM574 446h2v2h-2zM596 446h2v2h-2zM618 446h2v2h-2zM640 446h2v2h-2zM663 446h2v2h-2zM685 446h2v2h-2zM707 446h2v2h-2zM729 446h2v2h-2zM751 446h2v2h-2zM774 446h2v2h-2zM796 446h2v2h-2zM818 446h2v2h-2zM840 446h2v2h-2zM862 446h2v2h-2zM885 446h2v2h-2zM907 446h2v2h-2zM929 446h2v2h-2zM951 446h2v2h-2zM973 446h2v2h-2zM995 446h2v2h-2zM1018 446h2v2h-2zM1040 446h2v2h-2zM1062 446h2v2h-2zM1084 446h2v2h-2zM1106 446h2v2h-2zM1129 446h2v2h-2zM1151 446h2v2h-2zM1173 446h2v2h-2zM1195 446h2v2h-2zM1217 446h2v2h-2zM1240 446h2v2h-2zM1262 446h2v2h-2zM1284 446h2v2h-2zM1306 446h2v2h-2zM1328 446h2v2h-2zM1350 446h2v2h-2zM1373 446h2v2h-2zM1395 446h2v2h-2zM1417 446h2v2h-2zM1439 446h2v2h-2zM1461 446h2v2h-2zM1484 446h2v2h-2zM1506 446h2v2h-2zM1528 446h2v2h-2zM1550 446h2v2h-2zM1572 446h2v2h-2zM1595 446h2v2h-2zM1617 446h2v2h-2zM1639 446h2v2h-2zM1661 446h2v2h-2zM1683 446h2v2h-2zM1706 446h2v2h-2zM1728 446h2v2h-2zM1750 446h2v2h-2zM1772 446h2v2h-2zM1794 446h2v2h-2zM1816 446h2v2h-2zM1839 446h2v2h-2zM1861 446h2v2h-2zM1883 446h2v2h-2zM1905 446h2v2h-2zM1927 446h2v2h-2zM1950 446h2v2h-2zM1972 446h2v2h-2zM108 468h2v2h-2zM130 468h2v2h-2zM152 468h2v2h-2zM174 468h2v2h-2zM197 468h2v2h-2zM219 468h2v2h-2zM241 468h2v2h-2zM263 468h2v2h-2zM285 468h2v2h-2zM308 468h2v2h-2zM330 468h2v2h-2zM352 468h2v2h-2zM374 468h2v2h-2zM396 468h2v2h-2zM419 468h2v2h-2zM441 468h2v2h-2zM463 468h2v2h-2zM485 468h2v2h-2zM507 468h2v2h-2zM529 468h2v2h-2zM552 468h2v2h-2zM574 468h2v2h-2zM596 468h2v2h-2zM618 468h2v2h-2zM640 468h2v2h-2zM663 468h2v2h-2zM685 468h2v2h-2zM707 468h2v2h-2zM729 468h2v2h-2zM751 468h2v2h-2zM774 468h2v2h-2zM796 468h2v2h-2zM818 468h2v2h-2zM840 468h2v2h-2zM862 468h2v2h-2zM885 468h2v2h-2zM907 468h2v2h-2zM929 468h2v2h-2zM951 468h2v2h-2zM973 468h2v2h-2zM995 468h2v2h-2zM1018 468h2v2h-2zM1040 468h2v2h-2zM1062 468h2v2h-2zM1084 468h2v2h-2zM1106 468h2v2h-2zM1129 468h2v2h-2zM1151 468h2v2h-2zM1173 468h2v2h-2zM1195 468h2v2h-2zM1217 468h2v2h-2zM1240 468h2v2h-2zM1262 468h2v2h-2zM1284 468h2v2h-2zM1306 468h2v2h-2zM1328 468h2v2h-2zM1350 468h2v2h-2zM1373 468h2v2h-2zM1395 468h2v2h-2zM1417 468h2v2h-2zM1439 468h2v2h-2zM1461 468h2v2h-2zM1484 468h2v2h-2zM1506 468h2v2h-2zM1528 468h2v2h-2zM1550 468h2v2h-2zM1572 468h2v2h-2zM1595 468h2v2h-2zM1617 468h2v2h-2zM1639 468h2v2h-2zM1661 468h2v2h-2zM1683 468h2v2h-2zM1706 468h2v2h-2zM1728 468h2v2h-2zM1750 468h2v2h-2zM1772 468h2v2h-2zM1794 468h2v2h-2zM1816 468h2v2h-2zM1839 468h2v2h-2zM1861 468h2v2h-2zM1883 468h2v2h-2zM1905 468h2v2h-2zM1927 468h2v2h-2zM1950 468h2v2h-2zM1972 468h2v2h-2zM108 490h2v2h-2zM130 490h2v2h-2zM152 490h2v2h-2zM174 490h2v2h-2zM197 490h2v2h-2zM219 490h2v2h-2zM241 490h2v2h-2zM263 490h2v2h-2zM285 490h2v2h-2zM308 490h2v2h-2zM330 490h2v2h-2zM352 490h2v2h-2zM374 490h2v2h-2zM396 490h2v2h-2zM419 490h2v2h-2zM441 490h2v2h-2zM463 490h2v2h-2zM485 490h2v2h-2zM507 490h2v2h-2zM529 490h2v2h-2zM552 490h2v2h-2zM574 490h2v2h-2zM596 490h2v2h-2zM618 490h2v2h-2zM640 490h2v2h-2zM663 490h2v2h-2zM685 490h2v2h-2zM707 490h2v2h-2zM729 490h2v2h-2zM751 490h2v2h-2zM774 490h2v2h-2zM796 490h2v2h-2zM818 490h2v2h-2zM840 490h2v2h-2zM862 490h2v2h-2zM885 490h2v2h-2zM907 490h2v2h-2zM929 490h2v2h-2zM951 490h2v2h-2zM973 490h2v2h-2zM995 490h2v2h-2zM1018 490h2v2h-2zM1040 490h2v2h-2zM1062 490h2v2h-2zM1084 490h2v2h-2zM1106 490h2v2h-2zM1129 490h2v2h-2zM1151 490h2v2h-2zM1173 490h2v2h-2zM1195 490h2v2h-2zM1217 490h2v2h-2zM1240 490h2v2h-2zM1262 490h2v2h-2zM1284 490h2v2h-2zM1306 490h2v2h-2zM1328 490h2v2h-2zM1350 490h2v2h-2zM1373 490h2v2h-2zM1395 490h2v2h-2zM1417 490h2v2h-2zM1439 490h2v2h-2zM1461 490h2v2h-2zM1484 490h2v2h-2zM1506 490h2v2h-2zM1528 490h2v2h-2zM1550 490h2v2h-2zM1572 490h2v2h-2zM1595 490h2v2h-2zM1617 490h2v2h-2zM1639 490h2v2h-2zM1661 490h2v2h-2zM1683 490h2v2h-2zM1706 490h2v2h-2zM1728 490h2v2h-2zM1750 490h2v2h-2zM1772 490h2v2h-2zM1794 490h2v2h-2zM1816 490h2v2h-2zM1839 490h2v2h-2zM1861 490h2v2h-2zM1883 490h2v2h-2zM1905 490h2v2h-2zM1927 490h2v2h-2zM1950 490h2v2h-2zM1972 490h2v2h-2zM108 512h2v2h-2zM130 512h2v2h-2zM152 512h2v2h-2zM174 512h2v2h-2zM197 512h2v2h-2zM219 512h2v2h-2zM241 512h2v2h-2zM263 512h2v2h-2zM285 512h2v2h-2zM308 512h2v2h-2zM330 512h2v2h-2zM352 512h2v2h-2zM374 512h2v2h-2zM396 512h2v2h-2zM419 512h2v2h-2zM441 512h2v2h-2zM463 512h2v2h-2zM485 512h2v2h-2zM507 512h2v2h-2zM529 512h2v2h-2zM552 512h2v2h-2zM574 512h2v2h-2zM596 512h2v2h-2zM618 512h2v2h-2zM640 512h2v2h-2zM663 512h2v2h-2zM685 512h2v2h-2zM707 512h2v2h-2zM729 512h2v2h-2zM751 512h2v2h-2zM774 512h2v2h-2zM796 512h2v2h-2zM818 512h2v2h-2zM840 512h2v2h-2zM862 512h2v2h-2zM885 512h2v2h-2zM907 512h2v2h-2zM929 512h2v2h-2zM951 512h2v2h-2zM973 512h2v2h-2zM995 512h2v2h-2zM1018 512h2v2h-2zM1040 512h2v2h-2zM1062 512h2v2h-2zM1084 512h2v2h-2zM1106 512h2v2h-2zM1129 512h2v2h-2zM1151 512h2v2h-2zM1173 512h2v2h-2zM1195 512h2v2h-2zM1217 512h2v2h-2zM1240 512h2v2h-2zM1262 512h2v2h-2zM1284 512h2v2h-2zM1306 512h2v2h-2zM1328 512h2v2h-2zM1350 512h2v2h-2zM1373 512h2v2h-2zM1395 512h2v2h-2zM1417 512h2v2h-2zM1439 512h2v2h-2zM1461 512h2v2h-2zM1484 512h2v2h-2zM1506 512h2v2h-2zM1528 512h2v2h-2zM1550 512h2v2h-2zM1572 512h2v2h-2zM1595 512h2v2h-2zM1617 512h2v2h-2zM1639 512h2v2h-2zM1661 512h2v2h-2zM1683 512h2v2h-2zM1706 512h2v2h-2zM1728 512h2v2h-2zM1750 512h2v2h-2zM1772 512h2v2h-2zM1794 512h2v2h-2zM1816 512h2v2h-2zM1839 512h2v2h-2zM1861 512h2v2h-2zM1883 512h2v2h-2zM1905 512h2v2h-2zM1927 512h2v2h-2zM1950 512h2v2h-2zM1972 512h2v2h-2zM108 534h2v2h-2zM130 534h2v2h-2zM152 534h2v2h-2zM174 534h2v2h-2zM197 534h2v2h-2zM219 534h2v2h-2zM241 534h2v2h-2zM263 534h2v2h-2zM285 534h2v2h-2zM308 534h2v2h-2zM330 534h2v2h-2zM352 534h2v2h-2zM374 534h2v2h-2zM396 534h2v2h-2zM419 534h2v2h-2zM441 534h2v2h-2zM463 534h2v2h-2zM485 534h2v2h-2zM507 534h2v2h-2zM529 534h2v2h-2zM552 534h2v2h-2zM574 534h2v2h-2zM596 534h2v2h-2zM618 534h2v2h-2zM640 534h2v2h-2zM663 534h2v2h-2zM685 534h2v2h-2zM707 534h2v2h-2zM729 534h2v2h-2zM751 534h2v2h-2zM774 534h2v2h-2zM796 534h2v2h-2zM818 534h2v2h-2zM840 534h2v2h-2zM862 534h2v2h-2zM885 534h2v2h-2zM907 534h2v2h-2zM929 534h2v2h-2zM951 534h2v2h-2zM973 534h2v2h-2zM995 534h2v2h-2zM1018 534h2v2h-2zM1040 534h2v2h-2zM1062 534h2v2h-2zM1084 534h2v2h-2zM1106 534h2v2h-2zM1129 534h2v2h-2zM1151 534h2v2h-2zM1173 534h2v2h-2zM1195 534h2v2h-2zM1217 534h2v2h-2zM1240 534h2v2h-2zM1262 534h2v2h-2zM1284 534h2v2h-2zM1306 534h2v2h-2zM1328 534h2v2h-2zM1350 534h2v2h-2zM1373 534h2v2h-2zM1395 534h2v2h-2zM1417 534h2v2h-2zM1439 534h2v2h-2zM1461 534h2v2h-2zM1484 534h2v2h-2zM1506 534h2v2h-2zM1528 534h2v2h-2zM1550 534h2v2h-2zM1572 534h2v2h-2zM1595 534h2v2h-2zM1617 534h2v2h-2zM1639 534h2v2h-2zM1661 534h2v2h-2zM1683 534h2v2h-2zM1706 534h2v2h-2zM1728 534h2v2h-2zM1750 534h2v2h-2zM1772 534h2v2h-2zM1794 534h2v2h-2zM1816 534h2v2h-2zM1839 534h2v2h-2zM1861 534h2v2h-2zM1883 534h2v2h-2zM1905 534h2v2h-2zM1927 534h2v2h-2zM1950 534h2v2h-2zM1972 534h2v2h-2zM108 557h2v2h-2zM130 557h2v2h-2zM152 557h2v2h-2zM174 557h2v2h-2zM197 557h2v2h-2zM219 557h2v2h-2zM241 557h2v2h-2zM263 557h2v2h-2zM285 557h2v2h-2zM308 557h2v2h-2zM330 557h2v2h-2zM352 557h2v2h-2zM374 557h2v2h-2zM396 557h2v2h-2zM419 557h2v2h-2zM441 557h2v2h-2zM463 557h2v2h-2zM485 557h2v2h-2zM507 557h2v2h-2zM529 557h2v2h-2zM552 557h2v2h-2zM574 557h2v2h-2zM596 557h2v2h-2zM618 557h2v2h-2zM640 557h2v2h-2zM663 557h2v2h-2zM685 557h2v2h-2zM707 557h2v2h-2zM729 557h2v2h-2zM751 557h2v2h-2zM774 557h2v2h-2zM796 557h2v2h-2zM818 557h2v2h-2zM840 557h2v2h-2zM862 557h2v2h-2zM885 557h2v2h-2zM907 557h2v2h-2zM929 557h2v2h-2zM951 557h2v2h-2zM973 557h2v2h-2zM995 557h2v2h-2zM1018 557h2v2h-2zM1040 557h2v2h-2zM1062 557h2v2h-2zM1084 557h2v2h-2zM1106 557h2v2h-2zM1129 557h2v2h-2zM1151 557h2v2h-2zM1173 557h2v2h-2zM1195 557h2v2h-2zM1217 557h2v2h-2zM1240 557h2v2h-2zM1262 557h2v2h-2zM1284 557h2v2h-2zM1306 557h2v2h-2zM1328 557h2v2h-2zM1350 557h2v2h-2zM1373 557h2v2h-2zM1395 557h2v2h-2zM1417 557h2v2h-2zM1439 557h2v2h-2zM1461 557h2v2h-2zM1484 557h2v2h-2zM1506 557h2v2h-2zM1528 557h2v2h-2zM1550 557h2v2h-2zM1572 557h2v2h-2zM1595 557h2v2h-2zM1617 557h2v2h-2zM1639 557h2v2h-2zM1661 557h2v2h-2zM1683 557h2v2h-2zM1706 557h2v2h-2zM1728 557h2v2h-2zM1750 557h2v2h-2zM1772 557h2v2h-2zM1794 557h2v2h-2zM1816 557h2v2h-2zM1839 557h2v2h-2zM1861 557h2v2h-2zM1883 557h2v2h-2zM1905 557h2v2h-2zM1927 557h2v2h-2zM1950 557h2v2h-2zM1972 557h2v2h-2zM108 579h2v2h-2zM130 579h2v2h-2zM152 579h2v2h-2zM174 579h2v2h-2zM197 579h2v2h-2zM219 579h2v2h-2zM241 579h2v2h-2zM263 579h2v2h-2zM285 579h2v2h-2zM308 579h2v2h-2zM330 579h2v2h-2zM352 579h2v2h-2zM374 579h2v2h-2zM396 579h2v2h-2zM419 579h2v2h-2zM441 579h2v2h-2zM463 579h2v2h-2zM485 579h2v2h-2zM507 579h2v2h-2zM529 579h2v2h-2zM552 579h2v2h-2zM574 579h2v2h-2zM596 579h2v2h-2zM618 579h2v2h-2zM640 579h2v2h-2zM663 579h2v2h-2zM685 579h2v2h-2zM707 579h2v2h-2zM729 579h2v2h-2zM751 579h2v2h-2zM774 579h2v2h-2zM796 579h2v2h-2zM818 579h2v2h-2zM840 579h2v2h-2zM862 579h2v2h-2zM885 579h2v2h-2zM907 579h2v2h-2zM929 579h2v2h-2zM951 579h2v2h-2zM973 579h2v2h-2zM995 579h2v2h-2zM1018 579h2v2h-2zM1040 579h2v2h-2zM1062 579h2v2h-2zM1084 579h2v2h-2zM1106 579h2v2h-2zM1129 579h2v2h-2zM1151 579h2v2h-2zM1173 579h2v2h-2zM1195 579h2v2h-2zM1217 579h2v2h-2zM1240 579h2v2h-2zM1262 579h2v2h-2zM1284 579h2v2h-2zM1306 579h2v2h-2zM1328 579h2v2h-2zM1350 579h2v2h-2zM1373 579h2v2h-2zM1395 579h2v2h-2zM1417 579h2v2h-2zM1439 579h2v2h-2zM1461 579h2v2h-2zM1484 579h2v2h-2zM1506 579h2v2h-2zM1528 579h2v2h-2zM1550 579h2v2h-2zM1572 579h2v2h-2zM1595 579h2v2h-2zM1617 579h2v2h-2zM1639 579h2v2h-2zM1661 579h2v2h-2zM1683 579h2v2h-2zM1706 579h2v2h-2zM1728 579h2v2h-2zM1750 579h2v2h-2zM1772 579h2v2h-2zM1794 579h2v2h-2zM1816 579h2v2h-2zM1839 579h2v2h-2zM1861 579h2v2h-2zM1883 579h2v2h-2zM1905 579h2v2h-2zM1927 579h2v2h-2zM1950 579h2v2h-2zM1972 579h2v2h-2zM108 601h2v2h-2zM130 601h2v2h-2zM152 601h2v2h-2zM174 601h2v2h-2zM197 601h2v2h-2zM219 601h2v2h-2zM241 601h2v2h-2zM263 601h2v2h-2zM285 601h2v2h-2zM308 601h2v2h-2zM330 601h2v2h-2zM352 601h2v2h-2zM374 601h2v2h-2zM396 601h2v2h-2zM419 601h2v2h-2zM441 601h2v2h-2zM463 601h2v2h-2zM485 601h2v2h-2zM507 601h2v2h-2zM529 601h2v2h-2zM552 601h2v2h-2zM574 601h2v2h-2zM596 601h2v2h-2zM618 601h2v2h-2zM640 601h2v2h-2zM663 601h2v2h-2zM685 601h2v2h-2zM707 601h2v2h-2zM729 601h2v2h-2zM751 601h2v2h-2zM774 601h2v2h-2zM796 601h2v2h-2zM818 601h2v2h-2zM840 601h2v2h-2zM862 601h2v2h-2zM885 601h2v2h-2zM907 601h2v2h-2zM929 601h2v2h-2zM951 601h2v2h-2zM973 601h2v2h-2zM995 601h2v2h-2zM1018 601h2v2h-2zM1040 601h2v2h-2zM1062 601h2v2h-2zM1084 601h2v2h-2zM1106 601h2v2h-2zM1129 601h2v2h-2zM1151 601h2v2h-2zM1173 601h2v2h-2zM1195 601h2v2h-2zM1217 601h2v2h-2zM1240 601h2v2h-2zM1262 601h2v2h-2zM1284 601h2v2h-2zM1306 601h2v2h-2zM1328 601h2v2h-2zM1350 601h2v2h-2zM1373 601h2v2h-2zM1395 601h2v2h-2zM1417 601h2v2h-2zM1439 601h2v2h-2zM1461 601h2v2h-2zM1484 601h2v2h-2zM1506 601h2v2h-2zM1528 601h2v2h-2zM1550 601h2v2h-2zM1572 601h2v2h-2zM1595 601h2v2h-2zM1617 601h2v2h-2zM1639 601h2v2h-2zM1661 601h2v2h-2zM1683 601h2v2h-2zM1706 601h2v2h-2zM1728 601h2v2h-2zM1750 601h2v2h-2zM1772 601h2v2h-2zM1794 601h2v2h-2zM1816 601h2v2h-2zM1839 601h2v2h-2zM1861 601h2v2h-2zM1883 601h2v2h-2zM1905 601h2v2h-2zM1927 601h2v2h-2zM1950 601h2v2h-2zM1972 601h2v2h-2zM108 623h2v2h-2zM130 623h2v2h-2zM152 623h2v2h-2zM174 623h2v2h-2zM197 623h2v2h-2zM219 623h2v2h-2zM241 623h2v2h-2zM263 623h2v2h-2zM285 623h2v2h-2zM308 623h2v2h-2zM330 623h2v2h-2zM352 623h2v2h-2zM374 623h2v2h-2zM396 623h2v2h-2zM419 623h2v2h-2zM441 623h2v2h-2zM463 623h2v2h-2zM485 623h2v2h-2zM507 623h2v2h-2zM529 623h2v2h-2zM552 623h2v2h-2zM574 623h2v2h-2zM596 623h2v2h-2zM618 623h2v2h-2zM640 623h2v2h-2zM663 623h2v2h-2zM685 623h2v2h-2zM707 623h2v2h-2zM729 623h2v2h-2zM751 623h2v2h-2zM774 623h2v2h-2zM796 623h2v2h-2zM818 623h2v2h-2zM840 623h2v2h-2zM862 623h2v2h-2zM885 623h2v2h-2zM907 623h2v2h-2zM929 623h2v2h-2zM951 623h2v2h-2zM973 623h2v2h-2zM995 623h2v2h-2zM1018 623h2v2h-2zM1040 623h2v2h-2zM1062 623h2v2h-2zM1084 623h2v2h-2zM1106 623h2v2h-2zM1129 623h2v2h-2zM1151 623h2v2h-2zM1173 623h2v2h-2zM1195 623h2v2h-2zM1217 623h2v2h-2zM1240 623h2v2h-2zM1262 623h2v2h-2zM1284 623h2v2h-2zM1306 623h2v2h-2zM1328 623h2v2h-2zM1350 623h2v2h-2zM1373 623h2v2h-2zM1395 623h2v2h-2zM1417 623h2v2h-2zM1439 623h2v2h-2zM1461 623h2v2h-2zM1484 623h2v2h-2zM1506 623h2v2h-2zM1528 623h2v2h-2zM1550 623h2v2h-2zM1572 623h2v2h-2zM1595 623h2v2h-2zM1617 623h2v2h-2zM1639 623h2v2h-2zM1661 623h2v2h-2zM1683 623h2v2h-2zM1706 623h2v2h-2zM1728 623h2v2h-2zM1750 623h2v2h-2zM1772 623h2v2h-2zM1794 623h2v2h-2zM1816 623h2v2h-2zM1839 623h2v2h-2zM1861 623h2v2h-2zM1883 623h2v2h-2zM1905 623h2v2h-2zM1927 623h2v2h-2zM1950 623h2v2h-2zM1972 623h2v2h-2zM108 645h2v2h-2zM130 645h2v2h-2zM152 645h2v2h-2zM174 645h2v2h-2zM197 645h2v2h-2zM219 645h2v2h-2zM241 645h2v2h-2zM263 645h2v2h-2zM285 645h2v2h-2zM308 645h2v2h-2zM330 645h2v2h-2zM352 645h2v2h-2zM374 645h2v2h-2zM396 645h2v2h-2zM419 645h2v2h-2zM441 645h2v2h-2zM463 645h2v2h-2zM485 645h2v2h-2zM507 645h2v2h-2zM529 645h2v2h-2zM552 645h2v2h-2zM574 645h2v2h-2zM596 645h2v2h-2zM618 645h2v2h-2zM640 645h2v2h-2zM663 645h2v2h-2zM685 645h2v2h-2zM707 645h2v2h-2zM729 645h2v2h-2zM751 645h2v2h-2zM774 645h2v2h-2zM796 645h2v2h-2zM818 645h2v2h-2zM840 645h2v2h-2zM862 645h2v2h-2zM885 645h2v2h-2zM907 645h2v2h-2zM929 645h2v2h-2zM951 645h2v2h-2zM973 645h2v2h-2zM995 645h2v2h-2zM1018 645h2v2h-2zM1040 645h2v2h-2zM1062 645h2v2h-2zM1084 645h2v2h-2zM1106 645h2v2h-2zM1129 645h2v2h-2zM1151 645h2v2h-2zM1173 645h2v2h-2zM1195 645h2v2h-2zM1217 645h2v2h-2zM1240 645h2v2h-2zM1262 645h2v2h-2zM1284 645h2v2h-2zM1306 645h2v2h-2zM1328 645h2v2h-2zM1350 645h2v2h-2zM1373 645h2v2h-2zM1395 645h2v2h-2zM1417 645h2v2h-2zM1439 645h2v2h-2zM1461 645h2v2h-2zM1484 645h2v2h-2zM1506 645h2v2h-2zM1528 645h2v2h-2zM1550 645h2v2h-2zM1572 645h2v2h-2zM1595 645h2v2h-2zM1617 645h2v2h-2zM1639 645h2v2h-2zM1661 645h2v2h-2zM1683 645h2v2h-2zM1706 645h2v2h-2zM1728 645h2v2h-2zM1750 645h2v2h-2zM1772 645h2v2h-2zM1794 645h2v2h-2zM1816 645h2v2h-2zM1839 645h2v2h-2zM1861 645h2v2h-2zM1883 645h2v2h-2zM1905 645h2v2h-2zM1927 645h2v2h-2zM1950 645h2v2h-2zM1972 645h2v2h-2zM108 668h2v2h-2zM130 668h2v2h-2zM152 668h2v2h-2zM174 668h2v2h-2zM197 668h2v2h-2zM219 668h2v2h-2zM241 668h2v2h-2zM263 668h2v2h-2zM285 668h2v2h-2zM308 668h2v2h-2zM330 668h2v2h-2zM352 668h2v2h-2zM374 668h2v2h-2zM396 668h2v2h-2zM419 668h2v2h-2zM441 668h2v2h-2zM463 668h2v2h-2zM485 668h2v2h-2zM507 668h2v2h-2zM529 668h2v2h-2zM552 668h2v2h-2zM574 668h2v2h-2zM596 668h2v2h-2zM618 668h2v2h-2zM640 668h2v2h-2zM663 668h2v2h-2zM685 668h2v2h-2zM707 668h2v2h-2zM729 668h2v2h-2zM751 668h2v2h-2zM774 668h2v2h-2zM796 668h2v2h-2zM818 668h2v2h-2zM840 668h2v2h-2zM862 668h2v2h-2zM885 668h2v2h-2zM907 668h2v2h-2zM929 668h2v2h-2zM951 668h2v2h-2zM973 668h2v2h-2zM995 668h2v2h-2zM1018 668h2v2h-2zM1040 668h2v2h-2zM1062 668h2v2h-2zM1084 668h2v2h-2zM1106 668h2v2h-2zM1129 668h2v2h-2zM1151 668h2v2h-2zM1173 668h2v2h-2zM1195 668h2v2h-2zM1217 668h2v2h-2zM1240 668h2v2h-2zM1262 668h2v2h-2zM1284 668h2v2h-2zM1306 668h2v2h-2zM1328 668h2v2h-2zM1350 668h2v2h-2zM1373 668h2v2h-2zM1395 668h2v2h-2zM1417 668h2v2h-2zM1439 668h2v2h-2zM1461 668h2v2h-2zM1484 668h2v2h-2zM1506 668h2v2h-2zM1528 668h2v2h-2zM1550 668h2v2h-2zM1572 668h2v2h-2zM1595 668h2v2h-2zM1617 668h2v2h-2zM1639 668h2v2h-2zM1661 668h2v2h-2zM1683 668h2v2h-2zM1706 668h2v2h-2zM1728 668h2v2h-2zM1750 668h2v2h-2zM1772 668h2v2h-2zM1794 668h2v2h-2zM1816 668h2v2h-2zM1839 668h2v2h-2zM1861 668h2v2h-2zM1883 668h2v2h-2zM1905 668h2v2h-2zM1927 668h2v2h-2zM1950 668h2v2h-2zM1972 668h2v2h-2zM108 690h2v2h-2zM130 690h2v2h-2zM152 690h2v2h-2zM174 690h2v2h-2zM197 690h2v2h-2zM219 690h2v2h-2zM241 690h2v2h-2zM263 690h2v2h-2zM285 690h2v2h-2zM308 690h2v2h-2zM330 690h2v2h-2zM352 690h2v2h-2zM374 690h2v2h-2zM396 690h2v2h-2zM419 690h2v2h-2zM441 690h2v2h-2zM463 690h2v2h-2zM485 690h2v2h-2zM507 690h2v2h-2zM529 690h2v2h-2zM552 690h2v2h-2zM574 690h2v2h-2zM596 690h2v2h-2zM618 690h2v2h-2zM640 690h2v2h-2zM663 690h2v2h-2zM685 690h2v2h-2zM707 690h2v2h-2zM729 690h2v2h-2zM751 690h2v2h-2zM774 690h2v2h-2zM796 690h2v2h-2zM818 690h2v2h-2zM840 690h2v2h-2zM862 690h2v2h-2zM885 690h2v2h-2zM907 690h2v2h-2zM929 690h2v2h-2zM951 690h2v2h-2zM973 690h2v2h-2zM995 690h2v2h-2zM1018 690h2v2h-2zM1040 690h2v2h-2zM1062 690h2v2h-2zM1084 690h2v2h-2zM1106 690h2v2h-2zM1129 690h2v2h-2zM1151 690h2v2h-2zM1173 690h2v2h-2zM1195 690h2v2h-2zM1217 690h2v2h-2zM1240 690h2v2h-2zM1262 690h2v2h-2zM1284 690h2v2h-2zM1306 690h2v2h-2zM1328 690h2v2h-2zM1350 690h2v2h-2zM1373 690h2v2h-2zM1395 690h2v2h-2zM1417 690h2v2h-2zM1439 690h2v2h-2zM1461 690h2v2h-2zM1484 690h2v2h-2zM1506 690h2v2h-2zM1528 690h2v2h-2zM1550 690h2v2h-2zM1572 690h2v2h-2zM1595 690h2v2h-2zM1617 690h2v2h-2zM1639 690h2v2h-2zM1661 690h2v2h-2zM1683 690h2v2h-2zM1706 690h2v2h-2zM1728 690h2v2h-2zM1750 690h2v2h-2zM1772 690h2v2h-2zM1794 690h2v2h-2zM1816 690h2v2h-2zM1839 690h2v2h-2zM1861 690h2v2h-2zM1883 690h2v2h-2zM1905 690h2v2h-2zM1927 690h2v2h-2zM1950 690h2v2h-2zM1972 690h2v2h-2zM108 712h2v2h-2zM130 712h2v2h-2zM152 712h2v2h-2zM174 712h2v2h-2zM197 712h2v2h-2zM219 712h2v2h-2zM241 712h2v2h-2zM263 712h2v2h-2zM285 712h2v2h-2zM308 712h2v2h-2zM330 712h2v2h-2zM352 712h2v2h-2zM374 712h2v2h-2zM396 712h2v2h-2zM419 712h2v2h-2zM441 712h2v2h-2zM463 712h2v2h-2zM485 712h2v2h-2zM507 712h2v2h-2zM529 712h2v2h-2zM552 712h2v2h-2zM574 712h2v2h-2zM596 712h2v2h-2zM618 712h2v2h-2zM640 712h2v2h-2zM663 712h2v2h-2zM685 712h2v2h-2zM707 712h2v2h-2zM729 712h2v2h-2zM751 712h2v2h-2zM774 712h2v2h-2zM796 712h2v2h-2zM818 712h2v2h-2zM840 712h2v2h-2zM862 712h2v2h-2zM885 712h2v2h-2zM907 712h2v2h-2zM929 712h2v2h-2zM951 712h2v2h-2zM973 712h2v2h-2zM995 712h2v2h-2zM1018 712h2v2h-2zM1040 712h2v2h-2zM1062 712h2v2h-2zM1084 712h2v2h-2zM1106 712h2v2h-2zM1129 712h2v2h-2zM1151 712h2v2h-2zM1173 712h2v2h-2zM1195 712h2v2h-2zM1217 712h2v2h-2zM1240 712h2v2h-2zM1262 712h2v2h-2zM1284 712h2v2h-2zM1306 712h2v2h-2zM1328 712h2v2h-2zM1350 712h2v2h-2zM1373 712h2v2h-2zM1395 712h2v2h-2zM1417 712h2v2h-2zM1439 712h2v2h-2zM1461 712h2v2h-2zM1484 712h2v2h-2zM1506 712h2v2h-2zM1528 712h2v2h-2zM1550 712h2v2h-2zM1572 712h2v2h-2zM1595 712h2v2h-2zM1617 712h2v2h-2zM1639 712h2v2h-2zM1661 712h2v2h-2zM1683 712h2v2h-2zM1706 712h2v2h-2zM1728 712h2v2h-2zM1750 712h2v2h-2zM1772 712h2v2h-2zM1794 712h2v2h-2zM1816 712h2v2h-2zM1839 712h2v2h-2zM1861 712h2v2h-2zM1883 712h2v2h-2zM1905 712h2v2h-2zM1927 712h2v2h-2zM1950 712h2v2h-2zM1972 712h2v2h-2zM108 734h2v2h-2zM130 734h2v2h-2zM152 734h2v2h-2zM174 734h2v2h-2zM197 734h2v2h-2zM219 734h2v2h-2zM241 734h2v2h-2zM263 734h2v2h-2zM285 734h2v2h-2zM308 734h2v2h-2zM330 734h2v2h-2zM352 734h2v2h-2zM374 734h2v2h-2zM396 734h2v2h-2zM419 734h2v2h-2zM441 734h2v2h-2zM463 734h2v2h-2zM485 734h2v2h-2zM507 734h2v2h-2zM529 734h2v2h-2zM552 734h2v2h-2zM574 734h2v2h-2zM596 734h2v2h-2zM618 734h2v2h-2zM640 734h2v2h-2zM663 734h2v2h-2zM685 734h2v2h-2zM707 734h2v2h-2zM729 734h2v2h-2zM751 734h2v2h-2zM774 734h2v2h-2zM796 734h2v2h-2zM818 734h2v2h-2zM840 734h2v2h-2zM862 734h2v2h-2zM885 734h2v2h-2zM907 734h2v2h-2zM929 734h2v2h-2zM951 734h2v2h-2zM973 734h2v2h-2zM995 734h2v2h-2zM1018 734h2v2h-2zM1040 734h2v2h-2zM1062 734h2v2h-2zM1084 734h2v2h-2zM1106 734h2v2h-2zM1129 734h2v2h-2zM1151 734h2v2h-2zM1173 734h2v2h-2zM1195 734h2v2h-2zM1217 734h2v2h-2zM1240 734h2v2h-2zM1262 734h2v2h-2zM1284 734h2v2h-2zM1306 734h2v2h-2zM1328 734h2v2h-2zM1350 734h2v2h-2zM1373 734h2v2h-2zM1395 734h2v2h-2zM1417 734h2v2h-2zM1439 734h2v2h-2zM1461 734h2v2h-2zM1484 734h2v2h-2zM1506 734h2v2h-2zM1528 734h2v2h-2zM1550 734h2v2h-2zM1572 734h2v2h-2zM1595 734h2v2h-2zM1617 734h2v2h-2zM1639 734h2v2h-2zM1661 734h2v2h-2zM1683 734h2v2h-2zM1706 734h2v2h-2zM1728 734h2v2h-2zM1750 734h2v2h-2zM1772 734h2v2h-2zM1794 734h2v2h-2zM1816 734h2v2h-2zM1839 734h2v2h-2zM1861 734h2v2h-2zM1883 734h2v2h-2zM1905 734h2v2h-2zM1927 734h2v2h-2zM1950 734h2v2h-2zM1972 734h2v2h-2zM108 756h2v2h-2zM130 756h2v2h-2zM152 756h2v2h-2zM174 756h2v2h-2zM197 756h2v2h-2zM219 756h2v2h-2zM241 756h2v2h-2zM263 756h2v2h-2zM285 756h2v2h-2zM308 756h2v2h-2zM330 756h2v2h-2zM352 756h2v2h-2zM374 756h2v2h-2zM396 756h2v2h-2zM419 756h2v2h-2zM441 756h2v2h-2zM463 756h2v2h-2zM485 756h2v2h-2zM507 756h2v2h-2zM529 756h2v2h-2zM552 756h2v2h-2zM574 756h2v2h-2zM596 756h2v2h-2zM618 756h2v2h-2zM640 756h2v2h-2zM663 756h2v2h-2zM685 756h2v2h-2zM707 756h2v2h-2zM729 756h2v2h-2zM751 756h2v2h-2zM774 756h2v2h-2zM796 756h2v2h-2zM818 756h2v2h-2zM840 756h2v2h-2zM862 756h2v2h-2zM885 756h2v2h-2zM907 756h2v2h-2zM929 756h2v2h-2zM951 756h2v2h-2zM973 756h2v2h-2zM995 756h2v2h-2zM1018 756h2v2h-2zM1040 756h2v2h-2zM1062 756h2v2h-2zM1084 756h2v2h-2zM1106 756h2v2h-2zM1129 756h2v2h-2zM1151 756h2v2h-2zM1173 756h2v2h-2zM1195 756h2v2h-2zM1217 756h2v2h-2zM1240 756h2v2h-2zM1262 756h2v2h-2zM1284 756h2v2h-2zM1306 756h2v2h-2zM1328 756h2v2h-2zM1350 756h2v2h-2zM1373 756h2v2h-2zM1395 756h2v2h-2zM1417 756h2v2h-2zM1439 756h2v2h-2zM1461 756h2v2h-2zM1484 756h2v2h-2zM1506 756h2v2h-2zM1528 756h2v2h-2zM1550 756h2v2h-2zM1572 756h2v2h-2zM1595 756h2v2h-2zM1617 756h2v2h-2zM1639 756h2v2h-2zM1661 756h2v2h-2zM1683 756h2v2h-2zM1706 756h2v2h-2zM1728 756h2v2h-2zM1750 756h2v2h-2zM1772 756h2v2h-2zM1794 756h2v2h-2zM1816 756h2v2h-2zM1839 756h2v2h-2zM1861 756h2v2h-2zM1883 756h2v2h-2zM1905 756h2v2h-2zM1927 756h2v2h-2zM1950 756h2v2h-2zM1972 756h2v2h-2zM108 778h2v2h-2zM130 778h2v2h-2zM152 778h2v2h-2zM174 778h2v2h-2zM197 778h2v2h-2zM219 778h2v2h-2zM241 778h2v2h-2zM263 778h2v2h-2zM285 778h2v2h-2zM308 778h2v2h-2zM330 778h2v2h-2zM352 778h2v2h-2zM374 778h2v2h-2zM396 778h2v2h-2zM419 778h2v2h-2zM441 778h2v2h-2zM463 778h2v2h-2zM485 778h2v2h-2zM507 778h2v2h-2zM529 778h2v2h-2zM552 778h2v2h-2zM574 778h2v2h-2zM596 778h2v2h-2zM618 778h2v2h-2zM640 778h2v2h-2zM663 778h2v2h-2zM685 778h2v2h-2zM707 778h2v2h-2zM729 778h2v2h-2zM751 778h2v2h-2zM774 778h2v2h-2zM796 778h2v2h-2zM818 778h2v2h-2zM840 778h2v2h-2zM862 778h2v2h-2zM885 778h2v2h-2zM907 778h2v2h-2zM929 778h2v2h-2zM951 778h2v2h-2zM973 778h2v2h-2zM995 778h2v2h-2zM1018 778h2v2h-2zM1040 778h2v2h-2zM1062 778h2v2h-2zM1084 778h2v2h-2zM1106 778h2v2h-2zM1129 778h2v2h-2zM1151 778h2v2h-2zM1173 778h2v2h-2zM1195 778h2v2h-2zM1217 778h2v2h-2zM1240 778h2v2h-2zM1262 778h2v2h-2zM1284 778h2v2h-2zM1306 778h2v2h-2zM1328 778h2v2h-2zM1350 778h2v2h-2zM1373 778h2v2h-2zM1395 778h2v2h-2zM1417 778h2v2h-2zM1439 778h2v2h-2zM1461 778h2v2h-2zM1484 778h2v2h-2zM1506 778h2v2h-2zM1528 778h2v2h-2zM1550 778h2v2h-2zM1572 778h2v2h-2zM1595 778h2v2h-2zM1617 778h2v2h-2zM1639 778h2v2h-2zM1661 778h2v2h-2zM1683 778h2v2h-2zM1706 778h2v2h-2zM1728 778h2v2h-2zM1750 778h2v2h-2zM1772 778h2v2h-2zM1794 778h2v2h-2zM1816 778h2v2h-2zM1839 778h2v2h-2zM1861 778h2v2h-2zM1883 778h2v2h-2zM1905 778h2v2h-2zM1927 778h2v2h-2zM1950 778h2v2h-2zM1972 778h2v2h-2zM108 801h2v2h-2zM130 801h2v2h-2zM152 801h2v2h-2zM174 801h2v2h-2zM197 801h2v2h-2zM219 801h2v2h-2zM241 801h2v2h-2zM263 801h2v2h-2zM285 801h2v2h-2zM308 801h2v2h-2zM330 801h2v2h-2zM352 801h2v2h-2zM374 801h2v2h-2zM396 801h2v2h-2zM419 801h2v2h-2zM441 801h2v2h-2zM463 801h2v2h-2zM485 801h2v2h-2zM507 801h2v2h-2zM529 801h2v2h-2zM552 801h2v2h-2zM574 801h2v2h-2zM596 801h2v2h-2zM618 801h2v2h-2zM640 801h2v2h-2zM663 801h2v2h-2zM685 801h2v2h-2zM707 801h2v2h-2zM729 801h2v2h-2zM751 801h2v2h-2zM774 801h2v2h-2zM796 801h2v2h-2zM818 801h2v2h-2zM840 801h2v2h-2zM862 801h2v2h-2zM885 801h2v2h-2zM907 801h2v2h-2zM929 801h2v2h-2zM951 801h2v2h-2zM973 801h2v2h-2zM995 801h2v2h-2zM1018 801h2v2h-2zM1040 801h2v2h-2zM1062 801h2v2h-2zM1084 801h2v2h-2zM1106 801h2v2h-2zM1129 801h2v2h-2zM1151 801h2v2h-2zM1173 801h2v2h-2zM1195 801h2v2h-2zM1217 801h2v2h-2zM1240 801h2v2h-2zM1262 801h2v2h-2zM1284 801h2v2h-2zM1306 801h2v2h-2zM1328 801h2v2h-2zM1350 801h2v2h-2zM1373 801h2v2h-2zM1395 801h2v2h-2zM1417 801h2v2h-2zM1439 801h2v2h-2zM1461 801h2v2h-2zM1484 801h2v2h-2zM1506 801h2v2h-2zM1528 801h2v2h-2zM1550 801h2v2h-2zM1572 801h2v2h-2zM1595 801h2v2h-2zM1617 801h2v2h-2zM1639 801h2v2h-2zM1661 801h2v2h-2zM1683 801h2v2h-2zM1706 801h2v2h-2zM1728 801h2v2h-2zM1750 801h2v2h-2zM1772 801h2v2h-2zM1794 801h2v2h-2zM1816 801h2v2h-2zM1839 801h2v2h-2zM1861 801h2v2h-2zM1883 801h2v2h-2zM1905 801h2v2h-2zM1927 801h2v2h-2zM1950 801h2v2h-2zM1972 801h2v2h-2zM108 823h2v2h-2zM130 823h2v2h-2zM152 823h2v2h-2zM174 823h2v2h-2zM197 823h2v2h-2zM219 823h2v2h-2zM241 823h2v2h-2zM263 823h2v2h-2zM285 823h2v2h-2zM308 823h2v2h-2zM330 823h2v2h-2zM352 823h2v2h-2zM374 823h2v2h-2zM396 823h2v2h-2zM419 823h2v2h-2zM441 823h2v2h-2zM463 823h2v2h-2zM485 823h2v2h-2zM507 823h2v2h-2zM529 823h2v2h-2zM552 823h2v2h-2zM574 823h2v2h-2zM596 823h2v2h-2zM618 823h2v2h-2zM640 823h2v2h-2zM663 823h2v2h-2zM685 823h2v2h-2zM707 823h2v2h-2zM729 823h2v2h-2zM751 823h2v2h-2zM774 823h2v2h-2zM796 823h2v2h-2zM818 823h2v2h-2zM840 823h2v2h-2zM862 823h2v2h-2zM885 823h2v2h-2zM907 823h2v2h-2zM929 823h2v2h-2zM951 823h2v2h-2zM973 823h2v2h-2zM995 823h2v2h-2zM1018 823h2v2h-2zM1040 823h2v2h-2zM1062 823h2v2h-2zM1084 823h2v2h-2zM1106 823h2v2h-2zM1129 823h2v2h-2zM1151 823h2v2h-2zM1173 823h2v2h-2zM1195 823h2v2h-2zM1217 823h2v2h-2zM1240 823h2v2h-2zM1262 823h2v2h-2zM1284 823h2v2h-2zM1306 823h2v2h-2zM1328 823h2v2h-2zM1350 823h2v2h-2zM1373 823h2v2h-2zM1395 823h2v2h-2zM1417 823h2v2h-2zM1439 823h2v2h-2zM1461 823h2v2h-2zM1484 823h2v2h-2zM1506 823h2v2h-2zM1528 823h2v2h-2zM1550 823h2v2h-2zM1572 823h2v2h-2zM1595 823h2v2h-2zM1617 823h2v2h-2zM1639 823h2v2h-2zM1661 823h2v2h-2zM1683 823h2v2h-2zM1706 823h2v2h-2zM1728 823h2v2h-2zM1750 823h2v2h-2zM1772 823h2v2h-2zM1794 823h2v2h-2zM1816 823h2v2h-2zM1839 823h2v2h-2zM1861 823h2v2h-2zM1883 823h2v2h-2zM1905 823h2v2h-2zM1927 823h2v2h-2zM1950 823h2v2h-2zM1972 823h2v2h-2zM108 845h2v2h-2zM130 845h2v2h-2zM152 845h2v2h-2zM174 845h2v2h-2zM197 845h2v2h-2zM219 845h2v2h-2zM241 845h2v2h-2zM263 845h2v2h-2zM285 845h2v2h-2zM308 845h2v2h-2zM330 845h2v2h-2zM352 845h2v2h-2zM374 845h2v2h-2zM396 845h2v2h-2zM419 845h2v2h-2zM441 845h2v2h-2zM463 845h2v2h-2zM485 845h2v2h-2zM507 845h2v2h-2zM529 845h2v2h-2zM552 845h2v2h-2zM574 845h2v2h-2zM596 845h2v2h-2zM618 845h2v2h-2zM640 845h2v2h-2zM663 845h2v2h-2zM685 845h2v2h-2zM707 845h2v2h-2zM729 845h2v2h-2zM751 845h2v2h-2zM774 845h2v2h-2zM796 845h2v2h-2zM818 845h2v2h-2zM840 845h2v2h-2zM862 845h2v2h-2zM885 845h2v2h-2zM907 845h2v2h-2zM929 845h2v2h-2zM951 845h2v2h-2zM973 845h2v2h-2zM995 845h2v2h-2zM1018 845h2v2h-2zM1040 845h2v2h-2zM1062 845h2v2h-2zM1084 845h2v2h-2zM1106 845h2v2h-2zM1129 845h2v2h-2zM1151 845h2v2h-2zM1173 845h2v2h-2zM1195 845h2v2h-2zM1217 845h2v2h-2zM1240 845h2v2h-2zM1262 845h2v2h-2zM1284 845h2v2h-2zM1306 845h2v2h-2zM1328 845h2v2h-2zM1350 845h2v2h-2zM1373 845h2v2h-2zM1395 845h2v2h-2zM1417 845h2v2h-2zM1439 845h2v2h-2zM1461 845h2v2h-2zM1484 845h2v2h-2zM1506 845h2v2h-2zM1528 845h2v2h-2zM1550 845h2v2h-2zM1572 845h2v2h-2zM1595 845h2v2h-2zM1617 845h2v2h-2zM1639 845h2v2h-2zM1661 845h2v2h-2zM1683 845h2v2h-2zM1706 845h2v2h-2zM1728 845h2v2h-2zM1750 845h2v2h-2zM1772 845h2v2h-2zM1794 845h2v2h-2zM1816 845h2v2h-2zM1839 845h2v2h-2zM1861 845h2v2h-2zM1883 845h2v2h-2zM1905 845h2v2h-2zM1927 845h2v2h-2zM1950 845h2v2h-2zM1972 845h2v2h-2zM108 867h2v2h-2zM130 867h2v2h-2zM152 867h2v2h-2zM174 867h2v2h-2zM197 867h2v2h-2zM219 867h2v2h-2zM241 867h2v2h-2zM263 867h2v2h-2zM285 867h2v2h-2zM308 867h2v2h-2zM330 867h2v2h-2zM352 867h2v2h-2zM374 867h2v2h-2zM396 867h2v2h-2zM419 867h2v2h-2zM441 867h2v2h-2zM463 867h2v2h-2zM485 867h2v2h-2zM507 867h2v2h-2zM529 867h2v2h-2zM552 867h2v2h-2zM574 867h2v2h-2zM596 867h2v2h-2zM618 867h2v2h-2zM640 867h2v2h-2zM663 867h2v2h-2zM685 867h2v2h-2zM707 867h2v2h-2zM729 867h2v2h-2zM751 867h2v2h-2zM774 867h2v2h-2zM796 867h2v2h-2zM818 867h2v2h-2zM840 867h2v2h-2zM862 867h2v2h-2zM885 867h2v2h-2zM907 867h2v2h-2zM929 867h2v2h-2zM951 867h2v2h-2zM973 867h2v2h-2zM995 867h2v2h-2zM1018 867h2v2h-2zM1040 867h2v2h-2zM1062 867h2v2h-2zM1084 867h2v2h-2zM1106 867h2v2h-2zM1129 867h2v2h-2zM1151 867h2v2h-2zM1173 867h2v2h-2zM1195 867h2v2h-2zM1217 867h2v2h-2zM1240 867h2v2h-2zM1262 867h2v2h-2zM1284 867h2v2h-2zM1306 867h2v2h-2zM1328 867h2v2h-2zM1350 867h2v2h-2zM1373 867h2v2h-2zM1395 867h2v2h-2zM1417 867h2v2h-2zM1439 867h2v2h-2zM1461 867h2v2h-2zM1484 867h2v2h-2zM1506 867h2v2h-2zM1528 867h2v2h-2zM1550 867h2v2h-2zM1572 867h2v2h-2zM1595 867h2v2h-2zM1617 867h2v2h-2zM1639 867h2v2h-2zM1661 867h2v2h-2zM1683 867h2v2h-2zM1706 867h2v2h-2zM1728 867h2v2h-2zM1750 867h2v2h-2zM1772 867h2v2h-2zM1794 867h2v2h-2zM1816 867h2v2h-2zM1839 867h2v2h-2zM1861 867h2v2h-2zM1883 867h2v2h-2zM1905 867h2v2h-2zM1927 867h2v2h-2zM1950 867h2v2h-2zM1972 867h2v2h-2zM108 889h2v2h-2zM130 889h2v2h-2zM152 889h2v2h-2zM174 889h2v2h-2zM197 889h2v2h-2zM219 889h2v2h-2zM241 889h2v2h-2zM263 889h2v2h-2zM285 889h2v2h-2zM308 889h2v2h-2zM330 889h2v2h-2zM352 889h2v2h-2zM374 889h2v2h-2zM396 889h2v2h-2zM419 889h2v2h-2zM441 889h2v2h-2zM463 889h2v2h-2zM485 889h2v2h-2zM507 889h2v2h-2zM529 889h2v2h-2zM552 889h2v2h-2zM574 889h2v2h-2zM596 889h2v2h-2zM618 889h2v2h-2zM640 889h2v2h-2zM663 889h2v2h-2zM685 889h2v2h-2zM707 889h2v2h-2zM729 889h2v2h-2zM751 889h2v2h-2zM774 889h2v2h-2zM796 889h2v2h-2zM818 889h2v2h-2zM840 889h2v2h-2zM862 889h2v2h-2zM885 889h2v2h-2zM907 889h2v2h-2zM929 889h2v2h-2zM951 889h2v2h-2zM973 889h2v2h-2zM995 889h2v2h-2zM1018 889h2v2h-2zM1040 889h2v2h-2zM1062 889h2v2h-2zM1084 889h2v2h-2zM1106 889h2v2h-2zM1129 889h2v2h-2zM1151 889h2v2h-2zM1173 889h2v2h-2zM1195 889h2v2h-2zM1217 889h2v2h-2zM1240 889h2v2h-2zM1262 889h2v2h-2zM1284 889h2v2h-2zM1306 889h2v2h-2zM1328 889h2v2h-2zM1350 889h2v2h-2zM1373 889h2v2h-2zM1395 889h2v2h-2zM1417 889h2v2h-2zM1439 889h2v2h-2zM1461 889h2v2h-2zM1484 889h2v2h-2zM1506 889h2v2h-2zM1528 889h2v2h-2zM1550 889h2v2h-2zM1572 889h2v2h-2zM1595 889h2v2h-2zM1617 889h2v2h-2zM1639 889h2v2h-2zM1661 889h2v2h-2zM1683 889h2v2h-2zM1706 889h2v2h-2zM1728 889h2v2h-2zM1750 889h2v2h-2zM1772 889h2v2h-2zM1794 889h2v2h-2zM1816 889h2v2h-2zM1839 889h2v2h-2zM1861 889h2v2h-2zM1883 889h2v2h-2zM1905 889h2v2h-2zM1927 889h2v2h-2zM1950 889h2v2h-2zM1972 889h2v2h-2zM108 912h2v2h-2zM130 912h2v2h-2zM152 912h2v2h-2zM174 912h2v2h-2zM197 912h2v2h-2zM219 912h2v2h-2zM241 912h2v2h-2zM263 912h2v2h-2zM285 912h2v2h-2zM308 912h2v2h-2zM330 912h2v2h-2zM352 912h2v2h-2zM374 912h2v2h-2zM396 912h2v2h-2zM419 912h2v2h-2zM441 912h2v2h-2zM463 912h2v2h-2zM485 912h2v2h-2zM507 912h2v2h-2zM529 912h2v2h-2zM552 912h2v2h-2zM574 912h2v2h-2zM596 912h2v2h-2zM618 912h2v2h-2zM640 912h2v2h-2zM663 912h2v2h-2zM685 912h2v2h-2zM707 912h2v2h-2zM729 912h2v2h-2zM751 912h2v2h-2zM774 912h2v2h-2zM796 912h2v2h-2zM818 912h2v2h-2zM840 912h2v2h-2zM862 912h2v2h-2zM885 912h2v2h-2zM907 912h2v2h-2zM929 912h2v2h-2zM951 912h2v2h-2zM973 912h2v2h-2zM995 912h2v2h-2zM1018 912h2v2h-2zM1040 912h2v2h-2zM1062 912h2v2h-2zM1084 912h2v2h-2zM1106 912h2v2h-2zM1129 912h2v2h-2zM1151 912h2v2h-2zM1173 912h2v2h-2zM1195 912h2v2h-2zM1217 912h2v2h-2zM1240 912h2v2h-2zM1262 912h2v2h-2zM1284 912h2v2h-2zM1306 912h2v2h-2zM1328 912h2v2h-2zM1350 912h2v2h-2zM1373 912h2v2h-2zM1395 912h2v2h-2zM1417 912h2v2h-2zM1439 912h2v2h-2zM1461 912h2v2h-2zM1484 912h2v2h-2zM1506 912h2v2h-2zM1528 912h2v2h-2zM1550 912h2v2h-2zM1572 912h2v2h-2zM1595 912h2v2h-2zM1617 912h2v2h-2zM1639 912h2v2h-2zM1661 912h2v2h-2zM1683 912h2v2h-2zM1706 912h2v2h-2zM1728 912h2v2h-2zM1750 912h2v2h-2zM1772 912h2v2h-2zM1794 912h2v2h-2zM1816 912h2v2h-2zM1839 912h2v2h-2zM1861 912h2v2h-2zM1883 912h2v2h-2zM1905 912h2v2h-2zM1927 912h2v2h-2zM1950 912h2v2h-2zM1972 912h2v2h-2zM108 934h2v2h-2zM130 934h2v2h-2zM152 934h2v2h-2zM174 934h2v2h-2zM197 934h2v2h-2zM219 934h2v2h-2zM241 934h2v2h-2zM263 934h2v2h-2zM285 934h2v2h-2zM308 934h2v2h-2zM330 934h2v2h-2zM352 934h2v2h-2zM374 934h2v2h-2zM396 934h2v2h-2zM419 934h2v2h-2zM441 934h2v2h-2zM463 934h2v2h-2zM485 934h2v2h-2zM507 934h2v2h-2zM529 934h2v2h-2zM552 934h2v2h-2zM574 934h2v2h-2zM596 934h2v2h-2zM618 934h2v2h-2zM640 934h2v2h-2zM663 934h2v2h-2zM685 934h2v2h-2zM707 934h2v2h-2zM729 934h2v2h-2zM751 934h2v2h-2zM774 934h2v2h-2zM796 934h2v2h-2zM818 934h2v2h-2zM840 934h2v2h-2zM862 934h2v2h-2zM885 934h2v2h-2zM907 934h2v2h-2zM929 934h2v2h-2zM951 934h2v2h-2zM973 934h2v2h-2zM995 934h2v2h-2zM1018 934h2v2h-2zM1040 934h2v2h-2zM1062 934h2v2h-2zM1084 934h2v2h-2zM1106 934h2v2h-2zM1129 934h2v2h-2zM1151 934h2v2h-2zM1173 934h2v2h-2zM1195 934h2v2h-2zM1217 934h2v2h-2zM1240 934h2v2h-2zM1262 934h2v2h-2zM1284 934h2v2h-2zM1306 934h2v2h-2zM1328 934h2v2h-2zM1350 934h2v2h-2zM1373 934h2v2h-2zM1395 934h2v2h-2zM1417 934h2v2h-2zM1439 934h2v2h-2zM1461 934h2v2h-2zM1484 934h2v2h-2zM1506 934h2v2h-2zM1528 934h2v2h-2zM1550 934h2v2h-2zM1572 934h2v2h-2zM1595 934h2v2h-2zM1617 934h2v2h-2zM1639 934h2v2h-2zM1661 934h2v2h-2zM1683 934h2v2h-2zM1706 934h2v2h-2zM1728 934h2v2h-2zM1750 934h2v2h-2zM1772 934h2v2h-2zM1794 934h2v2h-2zM1816 934h2v2h-2zM1839 934h2v2h-2zM1861 934h2v2h-2zM1883 934h2v2h-2zM1905 934h2v2h-2zM1927 934h2v2h-2zM1950 934h2v2h-2zM1972 934h2v2h-2zM108 956h2v2h-2zM130 956h2v2h-2zM152 956h2v2h-2zM174 956h2v2h-2zM197 956h2v2h-2zM219 956h2v2h-2zM241 956h2v2h-2zM263 956h2v2h-2zM285 956h2v2h-2zM308 956h2v2h-2zM330 956h2v2h-2zM352 956h2v2h-2zM374 956h2v2h-2zM396 956h2v2h-2zM419 956h2v2h-2zM441 956h2v2h-2zM463 956h2v2h-2zM485 956h2v2h-2zM507 956h2v2h-2zM529 956h2v2h-2zM552 956h2v2h-2zM574 956h2v2h-2zM596 956h2v2h-2zM618 956h2v2h-2zM640 956h2v2h-2zM663 956h2v2h-2zM685 956h2v2h-2zM707 956h2v2h-2zM729 956h2v2h-2zM751 956h2v2h-2zM774 956h2v2h-2zM796 956h2v2h-2zM818 956h2v2h-2zM840 956h2v2h-2zM862 956h2v2h-2zM885 956h2v2h-2zM907 956h2v2h-2zM929 956h2v2h-2zM951 956h2v2h-2zM973 956h2v2h-2zM995 956h2v2h-2zM1018 956h2v2h-2zM1040 956h2v2h-2zM1062 956h2v2h-2zM1084 956h2v2h-2zM1106 956h2v2h-2zM1129 956h2v2h-2zM1151 956h2v2h-2zM1173 956h2v2h-2zM1195 956h2v2h-2zM1217 956h2v2h-2zM1240 956h2v2h-2zM1262 956h2v2h-2zM1284 956h2v2h-2zM1306 956h2v2h-2zM1328 956h2v2h-2zM1350 956h2v2h-2zM1373 956h2v2h-2zM1395 956h2v2h-2zM1417 956h2v2h-2zM1439 956h2v2h-2zM1461 956h2v2h-2zM1484 956h2v2h-2zM1506 956h2v2h-2zM1528 956h2v2h-2zM1550 956h2v2h-2zM1572 956h2v2h-2zM1595 956h2v2h-2zM1617 956h2v2h-2zM1639 956h2v2h-2zM1661 956h2v2h-2zM1683 956h2v2h-2zM1706 956h2v2h-2zM1728 956h2v2h-2zM1750 956h2v2h-2zM1772 956h2v2h-2zM1794 956h2v2h-2zM1816 956h2v2h-2zM1839 956h2v2h-2zM1861 956h2v2h-2zM1883 956h2v2h-2zM1905 956h2v2h-2zM1927 956h2v2h-2zM1950 956h2v2h-2zM1972 956h2v2h-2zM108 978h2v2h-2zM130 978h2v2h-2zM152 978h2v2h-2zM174 978h2v2h-2zM197 978h2v2h-2zM219 978h2v2h-2zM241 978h2v2h-2zM263 978h2v2h-2zM285 978h2v2h-2zM308 978h2v2h-2zM330 978h2v2h-2zM352 978h2v2h-2zM374 978h2v2h-2zM396 978h2v2h-2zM419 978h2v2h-2zM441 978h2v2h-2zM463 978h2v2h-2zM485 978h2v2h-2zM507 978h2v2h-2zM529 978h2v2h-2zM552 978h2v2h-2zM574 978h2v2h-2zM596 978h2v2h-2zM618 978h2v2h-2zM640 978h2v2h-2zM663 978h2v2h-2zM685 978h2v2h-2zM707 978h2v2h-2zM729 978h2v2h-2zM751 978h2v2h-2zM774 978h2v2h-2zM796 978h2v2h-2zM818 978h2v2h-2zM840 978h2v2h-2zM862 978h2v2h-2zM885 978h2v2h-2zM907 978h2v2h-2zM929 978h2v2h-2zM951 978h2v2h-2zM973 978h2v2h-2zM995 978h2v2h-2zM1018 978h2v2h-2zM1040 978h2v2h-2zM1062 978h2v2h-2zM1084 978h2v2h-2zM1106 978h2v2h-2zM1129 978h2v2h-2zM1151 978h2v2h-2zM1173 978h2v2h-2zM1195 978h2v2h-2zM1217 978h2v2h-2zM1240 978h2v2h-2zM1262 978h2v2h-2zM1284 978h2v2h-2zM1306 978h2v2h-2zM1328 978h2v2h-2zM1350 978h2v2h-2zM1373 978h2v2h-2zM1395 978h2v2h-2zM1417 978h2v2h-2zM1439 978h2v2h-2zM1461 978h2v2h-2zM1484 978h2v2h-2zM1506 978h2v2h-2zM1528 978h2v2h-2zM1550 978h2v2h-2zM1572 978h2v2h-2zM1595 978h2v2h-2zM1617 978h2v2h-2zM1639 978h2v2h-2zM1661 978h2v2h-2zM1683 978h2v2h-2zM1706 978h2v2h-2zM1728 978h2v2h-2zM1750 978h2v2h-2zM1772 978h2v2h-2zM1794 978h2v2h-2zM1816 978h2v2h-2zM1839 978h2v2h-2zM1861 978h2v2h-2zM1883 978h2v2h-2zM1905 978h2v2h-2zM1927 978h2v2h-2zM1950 978h2v2h-2zM1972 978h2v2h-2zM108 1000h2v2h-2zM130 1000h2v2h-2zM152 1000h2v2h-2zM174 1000h2v2h-2zM197 1000h2v2h-2zM219 1000h2v2h-2zM241 1000h2v2h-2zM263 1000h2v2h-2zM285 1000h2v2h-2zM308 1000h2v2h-2zM330 1000h2v2h-2zM352 1000h2v2h-2zM374 1000h2v2h-2zM396 1000h2v2h-2zM419 1000h2v2h-2zM441 1000h2v2h-2zM463 1000h2v2h-2zM485 1000h2v2h-2zM507 1000h2v2h-2zM529 1000h2v2h-2zM552 1000h2v2h-2zM574 1000h2v2h-2zM596 1000h2v2h-2zM618 1000h2v2h-2zM640 1000h2v2h-2zM663 1000h2v2h-2zM685 1000h2v2h-2zM707 1000h2v2h-2zM729 1000h2v2h-2zM751 1000h2v2h-2zM774 1000h2v2h-2zM796 1000h2v2h-2zM818 1000h2v2h-2zM840 1000h2v2h-2zM862 1000h2v2h-2zM885 1000h2v2h-2zM907 1000h2v2h-2zM929 1000h2v2h-2zM951 1000h2v2h-2zM973 1000h2v2h-2zM995 1000h2v2h-2zM1018 1000h2v2h-2zM1040 1000h2v2h-2zM1062 1000h2v2h-2zM1084 1000h2v2h-2zM1106 1000h2v2h-2zM1129 1000h2v2h-2zM1151 1000h2v2h-2zM1173 1000h2v2h-2zM1195 1000h2v2h-2zM1217 1000h2v2h-2zM1240 1000h2v2h-2zM1262 1000h2v2h-2zM1284 1000h2v2h-2zM1306 1000h2v2h-2zM1328 1000h2v2h-2zM1350 1000h2v2h-2zM1373 1000h2v2h-2zM1395 1000h2v2h-2zM1417 1000h2v2h-2zM1439 1000h2v2h-2zM1461 1000h2v2h-2zM1484 1000h2v2h-2zM1506 1000h2v2h-2zM1528 1000h2v2h-2zM1550 1000h2v2h-2zM1572 1000h2v2h-2zM1595 1000h2v2h-2zM1617 1000h2v2h-2zM1639 1000h2v2h-2zM1661 1000h2v2h-2zM1683 1000h2v2h-2zM1706 1000h2v2h-2zM1728 1000h2v2h-2zM1750 1000h2v2h-2zM1772 1000h2v2h-2zM1794 1000h2v2h-2zM1816 1000h2v2h-2zM1839 1000h2v2h-2zM1861 1000h2v2h-2zM1883 1000h2v2h-2zM1905 1000h2v2h-2zM1927 1000h2v2h-2zM1950 1000h2v2h-2zM1972 1000h2v2h-2zM108 1022h2v2h-2zM130 1022h2v2h-2zM152 1022h2v2h-2zM174 1022h2v2h-2zM197 1022h2v2h-2zM219 1022h2v2h-2zM241 1022h2v2h-2zM263 1022h2v2h-2zM285 1022h2v2h-2zM308 1022h2v2h-2zM330 1022h2v2h-2zM352 1022h2v2h-2zM374 1022h2v2h-2zM396 1022h2v2h-2zM419 1022h2v2h-2zM441 1022h2v2h-2zM463 1022h2v2h-2zM485 1022h2v2h-2zM507 1022h2v2h-2zM529 1022h2v2h-2zM552 1022h2v2h-2zM574 1022h2v2h-2zM596 1022h2v2h-2zM618 1022h2v2h-2zM640 1022h2v2h-2zM663 1022h2v2h-2zM685 1022h2v2h-2zM707 1022h2v2h-2zM729 1022h2v2h-2zM751 1022h2v2h-2zM774 1022h2v2h-2zM796 1022h2v2h-2zM818 1022h2v2h-2zM840 1022h2v2h-2zM862 1022h2v2h-2zM885 1022h2v2h-2zM907 1022h2v2h-2zM929 1022h2v2h-2zM951 1022h2v2h-2zM973 1022h2v2h-2zM995 1022h2v2h-2zM1018 1022h2v2h-2zM1040 1022h2v2h-2zM1062 1022h2v2h-2zM1084 1022h2v2h-2zM1106 1022h2v2h-2zM1129 1022h2v2h-2zM1151 1022h2v2h-2zM1173 1022h2v2h-2zM1195 1022h2v2h-2zM1217 1022h2v2h-2zM1240 1022h2v2h-2zM1262 1022h2v2h-2zM1284 1022h2v2h-2zM1306 1022h2v2h-2zM1328 1022h2v2h-2zM1350 1022h2v2h-2zM1373 1022h2v2h-2zM1395 1022h2v2h-2zM1417 1022h2v2h-2zM1439 1022h2v2h-2zM1461 1022h2v2h-2zM1484 1022h2v2h-2zM1506 1022h2v2h-2zM1528 1022h2v2h-2zM1550 1022h2v2h-2zM1572 1022h2v2h-2zM1595 1022h2v2h-2zM1617 1022h2v2h-2zM1639 1022h2v2h-2zM1661 1022h2v2h-2zM1683 1022h2v2h-2zM1706 1022h2v2h-2zM1728 1022h2v2h-2zM1750 1022h2v2h-2zM1772 1022h2v2h-2zM1794 1022h2v2h-2zM1816 1022h2v2h-2zM1839 1022h2v2h-2zM1861 1022h2v2h-2zM1883 1022h2v2h-2zM1905 1022h2v2h-2zM1927 1022h2v2h-2zM1950 1022h2v2h-2zM1972 1022h2v2h-2zM108 1045h2v2h-2zM130 1045h2v2h-2zM152 1045h2v2h-2zM174 1045h2v2h-2zM197 1045h2v2h-2zM219 1045h2v2h-2zM241 1045h2v2h-2zM263 1045h2v2h-2zM285 1045h2v2h-2zM308 1045h2v2h-2zM330 1045h2v2h-2zM352 1045h2v2h-2zM374 1045h2v2h-2zM396 1045h2v2h-2zM419 1045h2v2h-2zM441 1045h2v2h-2zM463 1045h2v2h-2zM485 1045h2v2h-2zM507 1045h2v2h-2zM529 1045h2v2h-2zM552 1045h2v2h-2zM574 1045h2v2h-2zM596 1045h2v2h-2zM618 1045h2v2h-2zM640 1045h2v2h-2zM663 1045h2v2h-2zM685 1045h2v2h-2zM707 1045h2v2h-2zM729 1045h2v2h-2zM751 1045h2v2h-2zM774 1045h2v2h-2zM796 1045h2v2h-2zM818 1045h2v2h-2zM840 1045h2v2h-2zM862 1045h2v2h-2zM885 1045h2v2h-2zM907 1045h2v2h-2zM929 1045h2v2h-2zM951 1045h2v2h-2zM973 1045h2v2h-2zM995 1045h2v2h-2zM1018 1045h2v2h-2zM1040 1045h2v2h-2zM1062 1045h2v2h-2zM1084 1045h2v2h-2zM1106 1045h2v2h-2zM1129 1045h2v2h-2zM1151 1045h2v2h-2zM1173 1045h2v2h-2zM1195 1045h2v2h-2zM1217 1045h2v2h-2zM1240 1045h2v2h-2zM1262 1045h2v2h-2zM1284 1045h2v2h-2zM1306 1045h2v2h-2zM1328 1045h2v2h-2zM1350 1045h2v2h-2zM1373 1045h2v2h-2zM1395 1045h2v2h-2zM1417 1045h2v2h-2zM1439 1045h2v2h-2zM1461 1045h2v2h-2zM1484 1045h2v2h-2zM1506 1045h2v2h-2zM1528 1045h2v2h-2zM1550 1045h2v2h-2zM1572 1045h2v2h-2zM1595 1045h2v2h-2zM1617 1045h2v2h-2zM1639 1045h2v2h-2zM1661 1045h2v2h-2zM1683 1045h2v2h-2zM1706 1045h2v2h-2zM1728 1045h2v2h-2zM1750 1045h2v2h-2zM1772 1045h2v2h-2zM1794 1045h2v2h-2zM1816 1045h2v2h-2zM1839 1045h2v2h-2zM1861 1045h2v2h-2zM1883 1045h2v2h-2zM1905 1045h2v2h-2zM1927 1045h2v2h-2zM1950 1045h2v2h-2zM1972 1045h2v2h-2zM108 1067h2v2h-2zM130 1067h2v2h-2zM152 1067h2v2h-2zM174 1067h2v2h-2zM197 1067h2v2h-2zM219 1067h2v2h-2zM241 1067h2v2h-2zM263 1067h2v2h-2zM285 1067h2v2h-2zM308 1067h2v2h-2zM330 1067h2v2h-2zM352 1067h2v2h-2zM374 1067h2v2h-2zM396 1067h2v2h-2zM419 1067h2v2h-2zM441 1067h2v2h-2zM463 1067h2v2h-2zM485 1067h2v2h-2zM507 1067h2v2h-2zM529 1067h2v2h-2zM552 1067h2v2h-2zM574 1067h2v2h-2zM596 1067h2v2h-2zM618 1067h2v2h-2zM640 1067h2v2h-2zM663 1067h2v2h-2zM685 1067h2v2h-2zM707 1067h2v2h-2zM729 1067h2v2h-2zM751 1067h2v2h-2zM774 1067h2v2h-2zM796 1067h2v2h-2zM818 1067h2v2h-2zM840 1067h2v2h-2zM862 1067h2v2h-2zM885 1067h2v2h-2zM907 1067h2v2h-2zM929 1067h2v2h-2zM951 1067h2v2h-2zM973 1067h2v2h-2zM995 1067h2v2h-2zM1018 1067h2v2h-2zM1040 1067h2v2h-2zM1062 1067h2v2h-2zM1084 1067h2v2h-2zM1106 1067h2v2h-2zM1129 1067h2v2h-2zM1151 1067h2v2h-2zM1173 1067h2v2h-2zM1195 1067h2v2h-2zM1217 1067h2v2h-2zM1240 1067h2v2h-2zM1262 1067h2v2h-2zM1284 1067h2v2h-2zM1306 1067h2v2h-2zM1328 1067h2v2h-2zM1350 1067h2v2h-2zM1373 1067h2v2h-2zM1395 1067h2v2h-2zM1417 1067h2v2h-2zM1439 1067h2v2h-2zM1461 1067h2v2h-2zM1484 1067h2v2h-2zM1506 1067h2v2h-2zM1528 1067h2v2h-2zM1550 1067h2v2h-2zM1572 1067h2v2h-2zM1595 1067h2v2h-2zM1617 1067h2v2h-2zM1639 1067h2v2h-2zM1661 1067h2v2h-2zM1683 1067h2v2h-2zM1706 1067h2v2h-2zM1728 1067h2v2h-2zM1750 1067h2v2h-2zM1772 1067h2v2h-2zM1794 1067h2v2h-2zM1816 1067h2v2h-2zM1839 1067h2v2h-2zM1861 1067h2v2h-2zM1883 1067h2v2h-2zM1905 1067h2v2h-2zM1927 1067h2v2h-2zM1950 1067h2v2h-2zM1972 1067h2v2h-2z"/>
<g clip-path="url(#canvasclip)">
<path d="M334 549 C369.0 549 369.0 550.6 404 550.6" fill="none" stroke="#fff" stroke-width="2"/>
<path d="M328 576 C368.75 576 368.75 578 409.5 578" fill="none" stroke="#8e22f0" stroke-width="2" stroke-dasharray="9.5 9"/>
<path d="M328 576 C369.25 576 369.25 465 410.5 465" fill="none" stroke="#8e22f0" stroke-width="2" stroke-dasharray="9.5 9"/>
<path d="M436 465 C545.5 465 545.5 465 655 465" fill="none" stroke="#8e22f0" stroke-width="2" stroke-dasharray="9.5 9"/>
<path d="M681 465 C728.0 465 728.0 577 775 577" fill="none" stroke="#8e22f0" stroke-width="2" stroke-dasharray="9.5 9"/>
<path d="M690 550.6 C730.0 550.6 730.0 550 770 550" fill="none" stroke="#fff" stroke-width="2"/>
<path d="M683 578 C729.0 578 729.0 605 775 605" fill="none" stroke="#8e22f0" stroke-width="2" stroke-dasharray="9.5 9"/>
<path d="M1054 550 C1184.5 550 1184.5 548.5 1315 548.5" fill="none" stroke="#fff" stroke-width="2"/>
<path d="M1048.3 577.6 C1183.9 577.6 1183.9 576.8 1319.5 576.8" fill="none" stroke="#ef6cae" stroke-width="2" stroke-dasharray="9.5 9"/>
<path d="M1048.3 605 C1183.9 605 1183.9 604.2 1319.5 604.2" fill="none" stroke="#8e22f0" stroke-width="2" stroke-dasharray="9.5 9"/>
<path d="M1054 633 C1184.0 633 1184.0 704 1314 704" fill="none" stroke="#fff" stroke-width="2"/>
<path d="M1048.3 577.6 C1183.65 577.6 1183.65 731.5 1319 731.5" fill="none" stroke="#ef6cae" stroke-width="2" stroke-dasharray="9.5 9"/>
<path d="M1048.3 661 C1183.65 661 1183.65 759.5 1319 759.5" fill="none" stroke="#8e22f0" stroke-width="2" stroke-dasharray="9.5 9"/>
<path d="M1599 549.6 C1677.7 549.6 1677.7 548 1756.4 548" fill="none" stroke="#fff" stroke-width="2"/>
<path d="M1593.5 576.5 C1677.5 576.5 1677.5 603.5 1761.5 603.5" fill="none" stroke="#8e22f0" stroke-width="2" stroke-dasharray="9.5 9"/>
<path d="M1691.4 423 C1726.45 423 1726.45 576.5 1761.5 576.5" fill="none" stroke="#8e22f0" stroke-width="2" stroke-dasharray="9.5 9"/>
<rect x="53" y="496" width="277" height="218" fill="#fff"/>
<rect x="55" y="498" width="273" height="27" fill="#353535"/>
<rect x="55" y="527" width="273" height="185" fill="#353535"/>
<text x="104.00" y="517.52" font-size="17.5" fill="#f4f4f4" textLength="98.00" lengthAdjust="spacingAndGlyphs" font-weight="bold">AP Connect</text>
<text x="222.30" y="582.19" font-size="18.0" fill="#f4f4f4" stroke="#f4f4f4" stroke-width="0.35" textLength="94.70" lengthAdjust="spacingAndGlyphs" font-weight="normal">Connection</text>
<path d="M323.5 544.3 H326.7 Q331.3 545.5 334.5 549.5 Q331.3 553.5 326.7 554.7 H323.5 Z" fill="#fff"/>
<circle cx="328" cy="576" r="4.5" fill="#8e22f0" stroke="#1a0a22" stroke-width="0.8"/>
<rect x="408" y="497" width="277" height="135" fill="#fff"/>
<rect x="410" y="499" width="273" height="28" fill="#353535"/>
<rect x="410" y="529" width="273" height="101" fill="#353535"/>
<text x="439.10" y="518.52" font-size="17.5" fill="#f4f4f4" textLength="91.91" lengthAdjust="spacingAndGlyphs" font-weight="bold">IMAP Inbox</text>
<text x="421.10" y="584.19" font-size="18.0" fill="#f4f4f4" stroke="#f4f4f4" stroke-width="0.35" textLength="94.80" lengthAdjust="spacingAndGlyphs" font-weight="normal">Connection</text>
<text x="421.10" y="612.19" font-size="18.0" fill="#f4f4f4" stroke="#f4f4f4" stroke-width="0.35" textLength="43.51" lengthAdjust="spacingAndGlyphs" font-weight="normal">Inbox</text>
<text x="573.80" y="584.19" font-size="18.0" fill="#f4f4f4" stroke="#f4f4f4" stroke-width="0.35" textLength="99.00" lengthAdjust="spacingAndGlyphs" font-weight="normal">Inbox Struct</text>
<path d="M405.3 545.4 H408.5 Q413.1 546.6 416.3 550.6 Q413.1 554.6 408.5 555.8000000000001 H405.3 Z" fill="#fff"/>
<path d="M678.7 545.4 H681.9000000000001 Q686.5 546.6 689.7 550.6 Q686.5 554.6 681.9000000000001 555.8000000000001 H678.7 Z" fill="#fff"/>
<circle cx="409.5" cy="578" r="4.5" fill="#8e22f0" stroke="#1a0a22" stroke-width="0.8"/>
<circle cx="409.5" cy="606" r="4.5" fill="#ef6cae" stroke="#1a0a22" stroke-width="0.8"/>
<circle cx="683.5" cy="578" r="4.5" fill="#8e22f0" stroke="#1a0a22" stroke-width="0.8"/>
<rect x="409.4" y="453.7" width="27.6" height="24.6" fill="#353535" stroke="#8e22f0" stroke-width="2"/>
<circle cx="410.4" cy="465.5" r="4.5" fill="#8e22f0" stroke="#1a0a22" stroke-width="0.8"/>
<circle cx="436.4" cy="465.5" r="4.5" fill="#8e22f0" stroke="#1a0a22" stroke-width="0.8"/>
<rect x="654" y="453.7" width="27.6" height="24.6" fill="#353535" stroke="#8e22f0" stroke-width="2"/>
<circle cx="655" cy="465.5" r="4.5" fill="#8e22f0" stroke="#1a0a22" stroke-width="0.8"/>
<circle cx="681" cy="465.5" r="4.5" fill="#8e22f0" stroke="#1a0a22" stroke-width="0.8"/>
<rect x="773" y="496" width="278" height="219" fill="#fff"/>
<rect x="775" y="498" width="274" height="28" fill="#3d9cf6"/>
<rect x="775" y="528" width="274" height="185" fill="#353535"/>
<text x="805.00" y="518.32" font-size="17.5" fill="#07101f" textLength="112.51" lengthAdjust="spacingAndGlyphs" font-weight="bold">Process Mails</text>
<text x="785.80" y="555.69" font-size="18.0" fill="#f4f4f4" stroke="#f4f4f4" stroke-width="0.35" textLength="14.50" lengthAdjust="spacingAndGlyphs" font-weight="normal">In</text>
<text x="785.80" y="583.19" font-size="18.0" fill="#f4f4f4" stroke="#f4f4f4" stroke-width="0.35" textLength="95.70" lengthAdjust="spacingAndGlyphs" font-weight="normal">Connection</text>
<text x="785.80" y="611.19" font-size="18.0" fill="#f4f4f4" stroke="#f4f4f4" stroke-width="0.35" textLength="44.51" lengthAdjust="spacingAndGlyphs" font-weight="normal">Inbox</text>
<text x="932.10" y="555.69" font-size="18.0" fill="#f4f4f4" stroke="#f4f4f4" stroke-width="0.35" textLength="107.30" lengthAdjust="spacingAndGlyphs" font-weight="normal">Email Parsing</text>
<text x="995.20" y="583.19" font-size="18.0" fill="#f4f4f4" stroke="#f4f4f4" stroke-width="0.35" textLength="40.31" lengthAdjust="spacingAndGlyphs" font-weight="normal">Hash</text>
<text x="991.40" y="611.19" font-size="18.0" fill="#f4f4f4" stroke="#f4f4f4" stroke-width="0.35" textLength="43.49" lengthAdjust="spacingAndGlyphs" font-weight="normal">Email</text>
<text x="910.90" y="638.99" font-size="18.0" fill="#f4f4f4" stroke="#f4f4f4" stroke-width="0.35" textLength="128.10" lengthAdjust="spacingAndGlyphs" font-weight="normal">For Attachment</text>
<text x="941.20" y="666.89" font-size="18.0" fill="#f4f4f4" stroke="#f4f4f4" stroke-width="0.35" textLength="96.80" lengthAdjust="spacingAndGlyphs" font-weight="normal">Attachment</text>
<text x="948.00" y="694.69" font-size="18.0" fill="#f4f4f4" stroke="#f4f4f4" stroke-width="0.35" textLength="91.00" lengthAdjust="spacingAndGlyphs" font-weight="normal">Email Done</text>
<path d="M770.6 544.5999999999999 H773.8000000000001 Q778.4 545.8 781.6 549.8 Q778.4 553.8 773.8000000000001 555.0 H770.6 Z" fill="#fff"/>
<circle cx="775" cy="577" r="4.5" fill="#8e22f0" stroke="#1a0a22" stroke-width="0.8"/>
<circle cx="775" cy="605" r="4.5" fill="#8e22f0" stroke="#1a0a22" stroke-width="0.8"/>
<path d="M1044.3 544.5999999999999 H1047.5 Q1052.1 545.8 1055.3 549.8 Q1052.1 553.8 1047.5 555.0 H1044.3 Z" fill="#fff"/>
<path d="M1044.3 627.5999999999999 H1047.5 Q1052.1 628.8 1055.3 632.8 Q1052.1 636.8 1047.5 638.0 H1044.3 Z" fill="#fff"/>
<path d="M1044.3 683.3 H1047.5 Q1052.1 684.5 1055.3 688.5 Q1052.1 692.5 1047.5 693.7 H1044.3 Z" fill="#fff"/>
<circle cx="1048.5" cy="577.6" r="4.5" fill="#ef6cae" stroke="#1a0a22" stroke-width="0.8"/>
<circle cx="1048.5" cy="605" r="4.5" fill="#8e22f0" stroke="#1a0a22" stroke-width="0.8"/>
<circle cx="1048.5" cy="661" r="4.5" fill="#8e22f0" stroke="#1a0a22" stroke-width="0.8"/>
<rect x="1318" y="495" width="277" height="135" fill="#fff"/>
<rect x="1320" y="497" width="273" height="28" fill="#3d9cf6"/>
<rect x="1320" y="527" width="273" height="101" fill="#353535"/>
<text x="1349.70" y="517.52" font-size="17.5" fill="#07101f" textLength="136.21" lengthAdjust="spacingAndGlyphs" font-weight="bold">Embedding + DB</text>
<text x="1330.70" y="554.69" font-size="18.0" fill="#f4f4f4" stroke="#f4f4f4" stroke-width="0.35" textLength="42.00" lengthAdjust="spacingAndGlyphs" font-weight="normal">Input</text>
<text x="1330.70" y="582.19" font-size="18.0" fill="#f4f4f4" stroke="#f4f4f4" stroke-width="0.35" textLength="40.31" lengthAdjust="spacingAndGlyphs" font-weight="normal">Hash</text>
<text x="1330.70" y="609.99" font-size="18.0" fill="#f4f4f4" stroke="#f4f4f4" stroke-width="0.35" textLength="31.89" lengthAdjust="spacingAndGlyphs" font-weight="normal">Mail</text>
<text x="1522.60" y="554.39" font-size="18.0" fill="#f4f4f4" stroke="#f4f4f4" stroke-width="0.35" textLength="58.30" lengthAdjust="spacingAndGlyphs" font-weight="normal">Output</text>
<text x="1531.60" y="582.39" font-size="18.0" fill="#f4f4f4" stroke="#f4f4f4" stroke-width="0.35" textLength="49.31" lengthAdjust="spacingAndGlyphs" font-weight="normal">Result</text>
<path d="M1315.5 543.5999999999999 H1318.7 Q1323.3 544.8 1326.5 548.8 Q1323.3 552.8 1318.7 554.0 H1315.5 Z" fill="#fff"/>
<path d="M1588.8 544.0999999999999 H1592.0 Q1596.6 545.3 1599.8 549.3 Q1596.6 553.3 1592.0 554.5 H1588.8 Z" fill="#fff"/>
<circle cx="1319.5" cy="576.8" r="4.5" fill="#ef6cae" stroke="#1a0a22" stroke-width="0.8"/>
<circle cx="1319.5" cy="604.2" r="4.5" fill="#8e22f0" stroke="#1a0a22" stroke-width="0.8"/>
<circle cx="1593.5" cy="576.5" r="4.5" fill="#8e22f0" stroke="#1a0a22" stroke-width="0.8"/>
<rect x="1317" y="650" width="277" height="135" fill="#fff"/>
<rect x="1319" y="652" width="273" height="28" fill="#3d9cf6"/>
<rect x="1319" y="682" width="273" height="101" fill="#353535"/>
<text x="1348.00" y="672.52" font-size="17.5" fill="#07101f" textLength="112.20" lengthAdjust="spacingAndGlyphs" font-weight="bold">Docling Parse</text>
<text x="1329.90" y="710.19" font-size="18.0" fill="#f4f4f4" stroke="#f4f4f4" stroke-width="0.35" textLength="41.70" lengthAdjust="spacingAndGlyphs" font-weight="normal">Input</text>
<text x="1329.90" y="737.49" font-size="18.0" fill="#f4f4f4" stroke="#f4f4f4" stroke-width="0.35" textLength="40.11" lengthAdjust="spacingAndGlyphs" font-weight="normal">Hash</text>
<text x="1329.90" y="765.39" font-size="18.0" fill="#f4f4f4" stroke="#f4f4f4" stroke-width="0.35" textLength="96.90" lengthAdjust="spacingAndGlyphs" font-weight="normal">Attachment</text>
<path d="M1314.6 698.8 H1317.8 Q1322.3999999999999 700.0 1325.6 704 Q1322.3999999999999 708.0 1317.8 709.2 H1314.6 Z" fill="#fff"/>
<circle cx="1319" cy="731.5" r="4.5" fill="#ef6cae" stroke="#1a0a22" stroke-width="0.8"/>
<circle cx="1319" cy="759.5" r="4.5" fill="#8e22f0" stroke="#1a0a22" stroke-width="0.8"/>
<rect x="1416" y="370" width="277" height="79" fill="#fff"/>
<rect x="1418" y="372" width="273" height="27" fill="url(#orange)"/>
<rect x="1418" y="401" width="273" height="46" fill="#353535"/>
<text x="1447.60" y="392.02" font-size="17.5" fill="#f4f4f4" textLength="114.09" lengthAdjust="spacingAndGlyphs" font-weight="bold">Get Database</text>
<rect x="1436" y="420" width="100" height="23.6" fill="#1e1e1e"/>
<rect x="1418" y="404" width="111" height="31.5" fill="#353535"/>
<text x="1429.30" y="429.49" font-size="18.0" fill="#f4f4f4" stroke="#f4f4f4" stroke-width="0.35" textLength="80.50" lengthAdjust="spacingAndGlyphs" font-weight="normal">Database</text>
<path d="M1517.5 421.5 L1521.5 425.5 L1525.5 421.5" fill="none" stroke="#fff" stroke-width="1.3" stroke-linecap="round" stroke-linejoin="round"/>
<text x="1635.70" y="429.19" font-size="18.0" fill="#f4f4f4" stroke="#f4f4f4" stroke-width="0.35" textLength="43.51" lengthAdjust="spacingAndGlyphs" font-weight="normal">Value</text>
<circle cx="1417.8" cy="423.3" r="4.5" fill="#ef6cae" stroke="#1a0a22" stroke-width="0.8"/>
<circle cx="1691.4" cy="423" r="4.5" fill="#8e22f0" stroke="#1a0a22" stroke-width="0.8"/>
<rect x="1759.5" y="495" width="230.5" height="135" fill="#fff"/>
<rect x="1761.5" y="497" width="226.5" height="28" fill="#353535"/>
<rect x="1761.5" y="527" width="226.5" height="101" fill="#353535"/>
<text x="1791.30" y="516.52" font-size="17.5" fill="#f4f4f4" textLength="47.40" lengthAdjust="spacingAndGlyphs" font-weight="bold">Insert</text>
<text x="1773.00" y="582.19" font-size="18.0" fill="#f4f4f4" stroke="#f4f4f4" stroke-width="0.35" textLength="77.00" lengthAdjust="spacingAndGlyphs" font-weight="normal">Database</text>
<text x="1773.00" y="609.59" font-size="18.0" fill="#f4f4f4" stroke="#f4f4f4" stroke-width="0.35" textLength="43.71" lengthAdjust="spacingAndGlyphs" font-weight="normal">Value</text>
<path d="M1757.3 543.0 H1760.5 Q1765.1 544.2 1768.3 548.2 Q1765.1 552.2 1760.5 553.4000000000001 H1757.3 Z" fill="#fff"/>
<circle cx="1761.5" cy="576.3" r="4.5" fill="#8e22f0" stroke="#1a0a22" stroke-width="0.8"/>
<circle cx="1761.5" cy="603.6" r="4.5" fill="#8e22f0" stroke="#1a0a22" stroke-width="0.8"/>
</g>
<g transform="translate(781.75 504.75) scale(0.6458333333333334)" fill="none" stroke="#07101f" stroke-width="2.5" stroke-linecap="round" stroke-linejoin="round"><path d="M4 14a1 1 0 0 1-.78-1.63l9.9-10.2a.5.5 0 0 1 .86.46l-1.92 6.02A1 1 0 0 0 13 10h7a1 1 0 0 1 .78 1.63l-9.9 10.2a.5.5 0 0 1-.86-.46l1.92-6.02A1 1 0 0 0 11 14z"/></g>
<g transform="translate(1326.45 504.54999999999995) scale(0.6458333333333334)" fill="none" stroke="#07101f" stroke-width="2.5" stroke-linecap="round" stroke-linejoin="round"><path d="M4 14a1 1 0 0 1-.78-1.63l9.9-10.2a.5.5 0 0 1 .86.46l-1.92 6.02A1 1 0 0 0 13 10h7a1 1 0 0 1 .78 1.63l-9.9 10.2a.5.5 0 0 1-.86-.46l1.92-6.02A1 1 0 0 0 11 14z"/></g>
<g transform="translate(1325.45 659.55) scale(0.6458333333333334)" fill="none" stroke="#07101f" stroke-width="2.5" stroke-linecap="round" stroke-linejoin="round"><path d="M4 14a1 1 0 0 1-.78-1.63l9.9-10.2a.5.5 0 0 1 .86.46l-1.92 6.02A1 1 0 0 0 13 10h7a1 1 0 0 1 .78 1.63l-9.9 10.2a.5.5 0 0 1-.86-.46l1.92-6.02A1 1 0 0 0 11 14z"/></g>
<g transform="translate(1424.25 378.25) scale(0.6875)" fill="none" stroke="#f4f4f4" stroke-width="2.4" stroke-linecap="round" stroke-linejoin="round"><path d="M8 21s-4-3-4-9 4-9 4-9"/><path d="M16 3s4 3 4 9-4 9-4 9"/><path d="M15 9l-6 6"/><path d="M9 9l6 6"/></g>
<g transform="translate(1768.65 503.45) scale(0.6458333333333334)" fill="none" stroke="#f4f4f4" stroke-width="2.3" stroke-linecap="round" stroke-linejoin="round"><ellipse cx="12" cy="5" rx="9" ry="3"/><path d="M3 5V19A9 3 0 0 0 21 19V5"/><path d="M3 12A9 3 0 0 0 21 12"/></g>
<g transform="translate(111.25 568.85) scale(0.6041666666666666)" fill="none" stroke="#ececec" stroke-width="2.3" stroke-linecap="round" stroke-linejoin="round"><path d="M8 21s-4-3-4-9 4-9 4-9"/><path d="M16 3s4 3 4 9-4 9-4 9"/><path d="M15 9l-6 6"/><path d="M9 9l6 6"/></g>
<g transform="translate(105.65 596.65) scale(0.6041666666666666)" fill="none" stroke="#ececec" stroke-width="2.3" stroke-linecap="round" stroke-linejoin="round"><path d="M8 21s-4-3-4-9 4-9 4-9"/><path d="M16 3s4 3 4 9-4 9-4 9"/><path d="M15 9l-6 6"/><path d="M9 9l6 6"/></g>
<g transform="translate(155.35 624.35) scale(0.6041666666666666)" fill="none" stroke="#ececec" stroke-width="2.3" stroke-linecap="round" stroke-linejoin="round"><path d="M8 21s-4-3-4-9 4-9 4-9"/><path d="M16 3s4 3 4 9-4 9-4 9"/><path d="M15 9l-6 6"/><path d="M9 9l6 6"/></g>
<g transform="translate(149.85 652.05) scale(0.6041666666666666)" fill="none" stroke="#ececec" stroke-width="2.3" stroke-linecap="round" stroke-linejoin="round"><path d="M8 21s-4-3-4-9 4-9 4-9"/><path d="M16 3s4 3 4 9-4 9-4 9"/><path d="M15 9l-6 6"/><path d="M9 9l6 6"/></g>
<g transform="translate(471.75 598.75) scale(0.6041666666666666)" fill="none" stroke="#ececec" stroke-width="2.3" stroke-linecap="round" stroke-linejoin="round"><path d="M8 21s-4-3-4-9 4-9 4-9"/><path d="M16 3s4 3 4 9-4 9-4 9"/><path d="M15 9l-6 6"/><path d="M9 9l6 6"/></g>
<g clip-path="url(#canvasclip)">
<text x="62.37" y="637.79" font-size="18.0" fill="#f4f4f4" stroke="#f4f4f4" stroke-width="0.35" textLength="85.52" lengthAdjust="spacingAndGlyphs" font-weight="normal">Username</text>
<text x="61.79" y="665.49" font-size="18.0" fill="#f4f4f4" stroke="#f4f4f4" stroke-width="0.35" textLength="81.40" lengthAdjust="spacingAndGlyphs" font-weight="normal">Password</text>
</g>
<rect x="105" y="684" width="53" height="23.4" fill="#1e1e1e"/>
<rect x="105" y="670" width="45.5" height="30" fill="#353535"/>
<g clip-path="url(#canvasclip)">
<text x="69.29" y="694.19" font-size="18.0" fill="#f4f4f4" stroke="#f4f4f4" stroke-width="0.35" textLength="62.01" lengthAdjust="spacingAndGlyphs" font-weight="normal">StartTls</text>
</g>
<path d="M139.5 686 L143.5 690 L147.5 686" fill="none" stroke="#fff" stroke-width="1.3" stroke-linecap="round" stroke-linejoin="round"/>
<rect x="103" y="70" width="2" height="1017" fill="#fff"/>
<path d="M103 1086.5 H1961 A14 14 0 0 0 1975.5 1072 V70" fill="none" stroke="#fff" stroke-width="1.3"/>
<rect x="1032" y="1081" width="16" height="6" rx="2" fill="#fff"/>
<rect x="104" y="571" width="7" height="15.5" rx="2" fill="#fff"/>
<rect x="1970.5" y="571" width="6" height="15" rx="2" fill="#fff"/>
<clipPath id="appclip"><rect x="64" y="78" width="32" height="32"/></clipPath><clipPath id="avclip"><rect x="64" y="1047" width="32" height="32"/></clipPath>
<g clip-path="url(#appclip)"><rect x="64" y="78" width="32" height="32" fill="#cdd0d6"/><linearGradient id="og" x1="0" y1="0" x2="0" y2="1"><stop offset="0" stop-color="#f07a5a"/><stop offset="1" stop-color="#f2b040"/></linearGradient><linearGradient id="mg" x1="0" y1="0" x2="0" y2="1"><stop offset="0" stop-color="#c040d8"/><stop offset="1" stop-color="#f050b0"/></linearGradient><linearGradient id="cg" x1="0" y1="0" x2="1" y2="1"><stop offset="0" stop-color="#50d8e0"/><stop offset="1" stop-color="#4a8ef0"/></linearGradient><path d="M64 93 Q66 90 72 90 L75 92 L75 106 L64 106 Z" fill="url(#og)"/><path d="M83 93 Q88 89 96 90 L96 110 L87 110 Q84 104 83 98 Z" fill="url(#mg)"/><ellipse cx="76.5" cy="84" rx="5" ry="4" fill="#4a5ee0"/><ellipse cx="94.5" cy="87.5" rx="3" ry="3.5" fill="#f2b84a"/><path d="M64 110 Q64 104 70 105 Q73 107 71 110 Z" fill="#5a30d8"/><ellipse cx="81" cy="94.5" rx="8.8" ry="7.5" fill="url(#cg)"/><path d="M72 98 L75 100 L71 102 Z" fill="#4cc0e4"/><rect x="75.5" y="92" width="1.6" height="1.6" fill="#dff"/><rect x="78.5" y="93" width="1.6" height="1.6" fill="#dff"/><rect x="82" y="93.2" width="1.6" height="1.6" fill="#dff"/></g>
<g transform="translate(72.0 134.0) scale(0.6666666666666666)" fill="none" stroke="#fff" stroke-width="2" stroke-linecap="round" stroke-linejoin="round"><path d="M19 14c1.490-1.46 3-3.21 3-5.5A5.5 5.5 0 0 0 16.5 3c-1.76 0-3 .5-4.5 2-1.5-1.5-2.74-2-4.5-2A5.5 5.5 0 0 0 2 8.5c0 2.3 1.5 4.05 3 5.5l7 7Z"/></g>
<g transform="translate(72.0 170.0) scale(0.6666666666666666)" fill="none" stroke="#fff" stroke-width="2" stroke-linecap="round" stroke-linejoin="round"><path d="m16 6 4 14"/><path d="M12 6v14"/><path d="M8 8v12"/><path d="M4 4v16"/></g>
<g transform="translate(72.0 226.0) scale(0.6666666666666666)" fill="none" stroke="#f0f0f0" stroke-width="2" stroke-linecap="round" stroke-linejoin="round"><path d="M18 21a8 8 0 0 0-16 0"/><circle cx="10" cy="8" r="5"/><path d="M22 20c0-3.37-2-6.500-4-8a5 5 0 0 0-.45-8.3"/></g>
<g transform="translate(72.0 262.0) scale(0.6666666666666666)" fill="none" stroke="#e8e8e8" stroke-width="2" stroke-linecap="round" stroke-linejoin="round"><rect width="7" height="9" x="3" y="3" rx="1"/><rect width="7" height="5" x="14" y="3" rx="1"/><rect width="7" height="9" x="14" y="12" rx="1"/><rect width="7" height="5" x="3" y="16" rx="1"/></g>
<g transform="translate(72.0 297.5) scale(0.6666666666666666)" fill="none" stroke="#e8e8e8" stroke-width="2" stroke-linecap="round" stroke-linejoin="round"><path d="M3 9h18v10a2 2 0 0 1-2 2H5a2 2 0 0 1-2-2V9Z"/><path d="m3 9 2.45-4.9A2 2 0 0 1 7.24 3h9.52a2 2 0 0 1 1.8 1.1L21 9"/><path d="M12 3v6"/></g>
<g transform="translate(72.0 353.5) scale(0.6666666666666666)" fill="none" stroke="#e8e8e8" stroke-width="2" stroke-linecap="round" stroke-linejoin="round"><rect width="8" height="8" x="3" y="3" rx="2"/><path d="M7 11v4a2 2 0 0 0 2 2h4"/><rect width="8" height="8" x="13" y="13" rx="2"/></g>
<g transform="translate(72.0 906.8) scale(0.6666666666666666)" fill="none" stroke="#fff" stroke-width="2" stroke-linecap="round" stroke-linejoin="round"><path d="m8 2 1.88 1.88"/><path d="M14.12 3.88 16 2"/><path d="M9 7.13v-1a3.003 3.003 0 1 1 6 0v1"/><path d="M12 20c-3.3 0-6-2.7-6-6v-3a4 4 0 0 1 4-4h4a4 4 0 0 1 4 4v3c0 3.3-2.7 6-6 6"/><path d="M12 20v-9"/><path d="M6.53 9C4.6 8.8 3 7.1 3 5"/><path d="M6 13H2"/><path d="M3 21c0-2.1 1.7-3.900 3.8-4"/><path d="M20.97 5c0 2.1-1.6 3.8-3.5 4"/><path d="M22 13h-4"/><path d="M17.2 17c2.1.1 3.8 1.9 3.8 4"/></g>
<g transform="translate(72.0 943.0) scale(0.6666666666666666)" fill="none" stroke="#fff" stroke-width="2" stroke-linecap="round" stroke-linejoin="round"><path d="M12 3a6 6 0 0 0 9 9 9 9 0 1 1-9-9Z"/></g>
<g transform="translate(72.0 979.0) scale(0.6666666666666666)" fill="none" stroke="#fff" stroke-width="2" stroke-linecap="round" stroke-linejoin="round"><path d="M2 3h6a4 4 0 0 1 4 4v14a3 3 0 0 0-3-3H2z"/><path d="M22 3h-6a4 4 0 0 0-4 4v14a3 3 0 0 1 3-3h7z"/></g>
<g transform="translate(72.0 1015.0) scale(0.6666666666666666)" fill="none" stroke="#e8e8e8" stroke-width="2" stroke-linecap="round" stroke-linejoin="round"><rect width="18" height="18" x="3" y="3" rx="2"/><path d="M9 3v18"/><path d="m14 9 3 3-3 3"/></g>
<g clip-path="url(#avclip)"><rect x="64" y="1047" width="32" height="32" fill="#d0d0d0"/><rect x="64" y="1048.0" width="28" height="1.6" fill="#f2f2f2"/><rect x="64" y="1051.2" width="28" height="1.6" fill="#f2f2f2"/><rect x="64" y="1054.4" width="28" height="1.6" fill="#f2f2f2"/><rect x="64" y="1057.6" width="28" height="1.6" fill="#f2f2f2"/><rect x="64" y="1060.8" width="28" height="1.6" fill="#f2f2f2"/><rect x="64" y="1064.0" width="28" height="1.6" fill="#f2f2f2"/><rect x="64" y="1067.2" width="28" height="1.6" fill="#f2f2f2"/><rect x="64" y="1070.4" width="28" height="1.6" fill="#f2f2f2"/><rect x="64" y="1073.6" width="28" height="1.6" fill="#f2f2f2"/><rect x="64" y="1076.8" width="28" height="1.6" fill="#f2f2f2"/><rect x="91.5" y="1047" width="4.5" height="28" fill="#7a7560"/><path d="M64 1079 L68 1074 Q74 1070 80 1071 Q88 1069 92 1072 L96 1075 L96 1079 Z" fill="#3e3e52"/><path d="M76.5 1070 L80 1079 L84 1079 L86 1071 Q81 1070 76.5 1070 Z" fill="#e6d8d2"/><ellipse cx="79.5" cy="1056" rx="7.3" ry="6.8" fill="#7a5a45"/><ellipse cx="79.5" cy="1062.3" rx="6.2" ry="7.3" fill="#c4967a"/></g>
<rect x="934.5" y="90.5" width="259" height="63" rx="14" fill="#303030" stroke="#d8d8d8" stroke-width="1.2"/>
<circle cx="971" cy="121" r="20.2" fill="#f6f63c"/>
<circle cx="1027" cy="121" r="20.2" fill="#f6f63c"/>
<circle cx="1083" cy="121" r="20.2" fill="#f6f63c"/>
<circle cx="1157" cy="121" r="20.2" fill="#f6f63c"/>
<rect x="1119" y="101" width="2.2" height="40" fill="#fff"/>
<g transform="translate(961.25 111.25) scale(0.8125)" fill="none" stroke="#111" stroke-width="2.1" stroke-linecap="round" stroke-linejoin="round"><path d="M19 15V9"/><path d="M15 15h-3v4l-7-7 7-7v4h3v6z"/></g>
<g transform="translate(1017.5 111.5) scale(0.7916666666666666)" fill="none" stroke="#111" stroke-width="2.1" stroke-linecap="round" stroke-linejoin="round"><path d="M8 21s-4-3-4-9 4-9 4-9"/><path d="M16 3s4 3 4 9-4 9-4 9"/><path d="M15 9l-6 6"/><path d="M9 9l6 6"/></g>
<g transform="translate(1072.5 110.5) scale(0.875)" fill="none" stroke="#111" stroke-width="2.0" stroke-linecap="round" stroke-linejoin="round"><path d="M13.4 2H6a2 2 0 0 0-2 2v16a2 2 0 0 0 2 2h12a2 2 0 0 0 2-2v-7.4"/><path d="M2 6h4"/><path d="M2 10h4"/><path d="M2 14h4"/><path d="M2 18h4"/><path d="M21.378 5.626a1 1 0 1 0-3.004-3.004l-5.01 5.012a2 2 0 0 0-.506.854l-.837 2.87a.5.5 0 0 0 .62.62l2.87-.837a2 2 0 0 0 .854-.506z"/></g>
<g transform="translate(1147.0 111.0) scale(0.8333333333333334)" fill="none" stroke="#111" stroke-width="2.0" stroke-linecap="round" stroke-linejoin="round"><path d="M3 12a9 9 0 1 0 9-9 9.75 9.75 0 0 0-6.74 2.74L3 8"/><path d="M3 3v5h5"/><path d="M12 7v5l4 2"/></g>
<rect x="120" y="967" width="26" height="104" fill="#2e2e2e"/>
<rect x="120" y="992" width="26" height="1" fill="#5a5a5a"/>
<rect x="120" y="1018" width="26" height="1" fill="#5a5a5a"/>
<rect x="120" y="1044" width="26" height="1" fill="#5a5a5a"/>
<path d="M127 980 H139 M133 974 V986" stroke="#fff" stroke-width="1.7" fill="none"/>
<rect x="127" y="1004.6" width="12" height="1.5" fill="#fff"/>
<path d="M127 1030 V1028.2 Q127 1026.2 129 1026.2 H130.5 M135.5 1026.2 H137 Q139 1026.2 139 1028.2 V1030 M139 1033 V1035 Q139 1037 137 1037 H135.5 M130.5 1037 H129 Q127 1037 127 1035 V1033" fill="none" stroke="#fff" stroke-width="1.6"/>
<rect x="128.3" y="1056.8" width="10" height="7.6" rx="1.3" fill="#fff"/><path d="M132.6 1052.6 Q136.6 1052.6 136.6 1057" fill="none" stroke="#fff" stroke-width="1.4"/><rect x="132.3" y="1059.8" width="2" height="2" fill="#2e2e2e"/>
<rect x="1760" y="921" width="200" height="150" fill="#1c1c1c"/>
<rect x="1766" y="950" width="63.3" height="25.3" fill="#3a3a3a"/>
<rect x="1897.2" y="975" width="54.8" height="29.6" fill="#000"/>
<rect x="1782.2" y="978.4" width="9.00" height="2.90" fill="#e06a78"/>
<rect x="1793.8" y="978.4" width="8.20" height="6.40" fill="#555"/>
<rect x="1803.8" y="978.4" width="8.20" height="11.60" fill="#555"/>
<rect x="1863.7" y="987" width="8.60" height="3.00" fill="#e06a78"/>
<rect x="1875.8" y="987" width="8.20" height="3.00" fill="#9a9a9a"/>
<rect x="1885.8" y="987" width="8.20" height="3.00" fill="#9a9a9a"/>
<rect x="1896" y="987" width="8.00" height="7.00" fill="#333"/>
<rect x="1906" y="987.5" width="8.00" height="3.80" fill="#2a2a2a"/>
<rect x="1917" y="987" width="8.00" height="7.00" fill="#aaa"/>
<rect x="1936" y="984" width="8.00" height="2.00" fill="#e8a040"/>
<rect x="1933" y="987" width="7.70" height="4.00" fill="#aaa"/>
<rect x="1933" y="992" width="7.70" height="3.60" fill="#aaa"/>
<rect x="1946" y="987.4" width="7.60" height="3.90" fill="#2a2a2a"/>
<rect x="1794.8" y="1008" width="8.20" height="2.80" fill="#e06a78"/>
<rect x="1806" y="1008" width="8.00" height="6.00" fill="#4a4a4a"/>
<rect x="1816.7" y="1008" width="8.10" height="3.70" fill="#4a4a4a"/>
<rect x="1825.8" y="1011" width="9.00" height="3.00" fill="#e8a040"/>
<rect x="1837.3" y="1008" width="8.10" height="3.70" fill="#4a4a4a"/>
<rect x="1794" y="1018.5" width="9.00" height="2.50" fill="#e06a78"/>
<rect x="1805" y="1018.5" width="8.00" height="6.50" fill="#4a4a4a"/>
<rect x="1816.7" y="1018.5" width="8.10" height="5.20" fill="#4a4a4a"/>
<rect x="1876.5" y="1016.3" width="8.20" height="2.70" fill="#e8a040"/>
<rect x="1865" y="1019.7" width="8.00" height="2.60" fill="#e06a78"/>
<rect x="1875.8" y="1019.7" width="8.20" height="2.60" fill="#9a9a9a"/>
<rect x="1890.8" y="1019.7" width="8.20" height="4.70" fill="#444"/>
<rect x="1900" y="1026.6" width="8.00" height="2.60" fill="#e8a040"/>
<rect x="1911" y="1026.6" width="8.00" height="3.40" fill="#e8a040"/>
<rect x="1922" y="1019.7" width="8.00" height="4.30" fill="#444"/>
<rect x="1875.6" y="1034.4" width="8.30" height="2.60" fill="#e8a040"/>
<rect x="1864" y="1037.8" width="8.30" height="2.60" fill="#e06a78"/>
<rect x="1875" y="1037.8" width="8.00" height="2.60" fill="#9a9a9a"/>
<rect x="1888" y="1037.8" width="8.00" height="4.20" fill="#444"/>
<rect x="1782" y="955" width="8.00" height="2.00" fill="#7a7050"/>
<rect x="1792" y="955" width="8.00" height="2.50" fill="#7a6a50"/>
<rect x="1771" y="962" width="8.00" height="2.00" fill="#4a4a4a"/>
<rect x="1783" y="961" width="8.00" height="5.00" fill="#484848"/>
<rect x="1796" y="962" width="8.00" height="4.00" fill="#484848"/>
<rect x="1786" y="968" width="8.00" height="2.50" fill="#6a6040"/>
<rect x="1812" y="962" width="8.00" height="10.00" fill="#444"/>
</svg></body></html>
